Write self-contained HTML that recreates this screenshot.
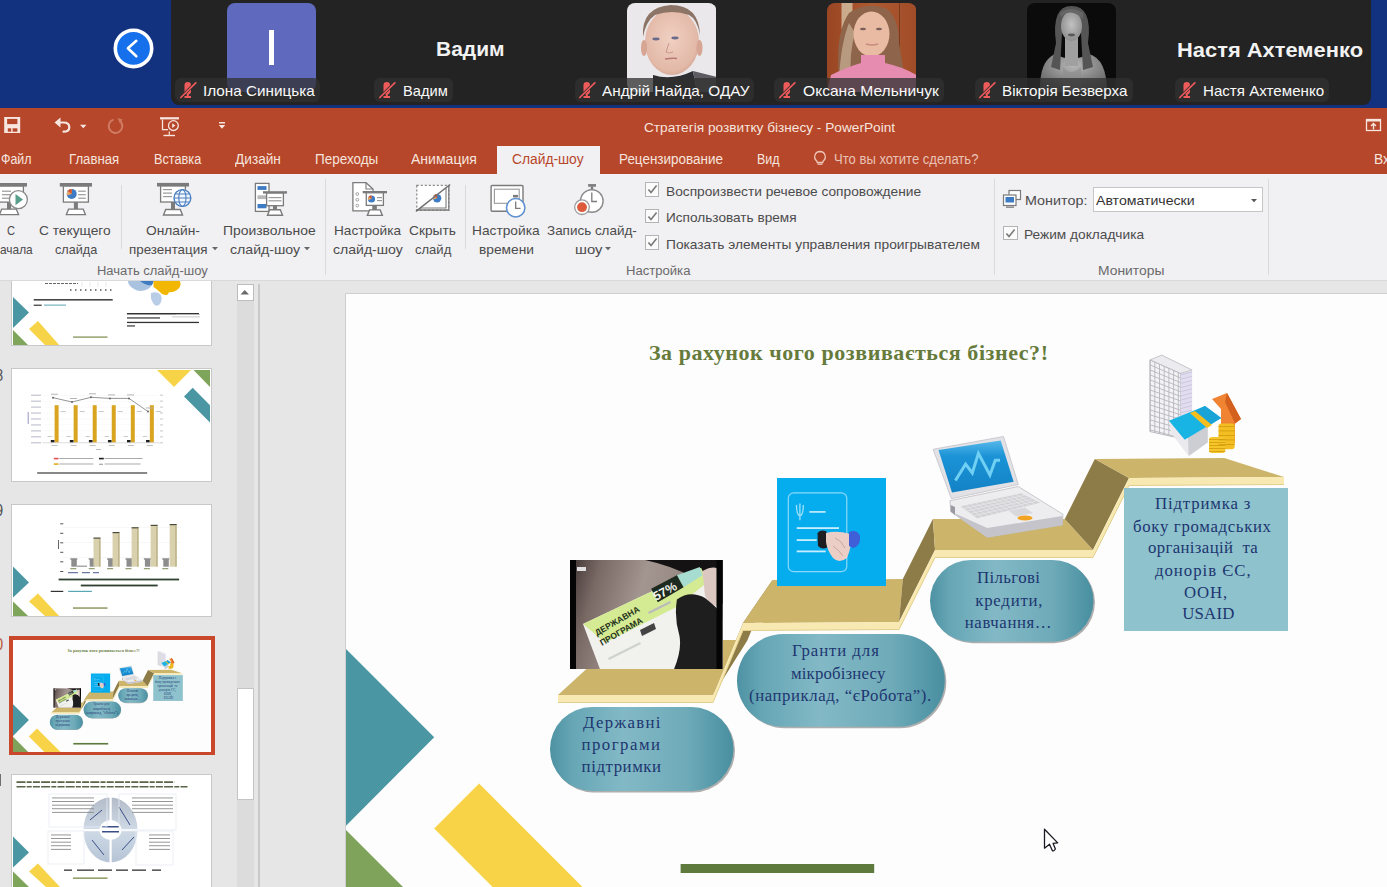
<!DOCTYPE html>
<html><head><meta charset="utf-8">
<style>
*{margin:0;padding:0;box-sizing:border-box}
html,body{width:1387px;height:887px;overflow:hidden;background:#e6e6e6;font-family:"Liberation Sans",sans-serif}
.a{position:absolute}
.t{position:absolute;white-space:nowrap}
</style></head><body>
<div class="a" style="left:0px;top:0px;width:1387px;height:108px;background:#12317f"></div>
<div class="a" style="left:171px;top:0px;width:1200px;height:104.8px;background:#232323;border-radius:0 0 8px 8px"></div>
<svg class="a" style="left:112px;top:27px;" width="44" height="44" viewBox="0 0 44 44"><circle cx="21.5" cy="21.4" r="18.2" fill="#1670eb" stroke="#fff" stroke-width="3.6"/><polyline points="24.3,13.8 15.9,21.2 24.3,29.3" fill="none" stroke="#fff" stroke-width="2.6" stroke-linecap="round" stroke-linejoin="round"/></svg>
<div class="a" style="left:226.6px;top:3.3px;width:89.4px;height:89px;background:#5f6abf;border-radius:8px"></div>
<div class="a" style="left:268.5px;top:30px;width:5px;height:35px;background:#fff"></div>
<svg class="a" style="left:626.7px;top:3.4px;" width="89.5" height="89" viewBox="0 0 89.5 89"><defs><clipPath id="c3"><rect width="89.5" height="89" rx="8"/></clipPath><radialGradient id="f3" cx=".48" cy=".45" r=".6"><stop offset="0" stop-color="#f0d0c2"/><stop offset=".8" stop-color="#e3b9a8"/><stop offset="1" stop-color="#d2a392"/></radialGradient></defs><g clip-path="url(#c3)"><rect width="89.5" height="89" fill="#ebe8eb"/><ellipse cx="45" cy="39" rx="27" ry="33" fill="url(#f3)"/><path d="M16 34 Q14 4 44 2 Q72 2 73 32 Q70 16 62 12 Q45 6 28 12 Q19 18 16 34 Z" fill="#8c7466"/><ellipse cx="17" cy="45" rx="3" ry="8" fill="#d6a593"/><ellipse cx="72.5" cy="45" rx="3" ry="8" fill="#d6a593"/><path d="M26 72 Q45 78 66 68 L70 89 L26 89 Z" fill="#2e2d31"/><path d="M66 68 L89.5 74 L89.5 89 L70 89 Z" fill="#5d5b61"/><ellipse cx="29" cy="36" rx="3.6" ry="1.4" fill="#6a6b8a"/><ellipse cx="48" cy="35" rx="3.6" ry="1.4" fill="#6a6b8a"/><path d="M38 56 Q45 55 50 55.5" stroke="#b87772" stroke-width="1.5" fill="none"/><path d="M42 40 L39 49 Q42 51 46 49" stroke="#c9998a" stroke-width="1" fill="none"/></g></svg>
<svg class="a" style="left:826.7px;top:3.4px;" width="89.5" height="89" viewBox="0 0 89.5 89"><defs><clipPath id="c4"><rect width="89.5" height="89" rx="8"/></clipPath><linearGradient id="w4" x1="0" x2="1"><stop offset="0" stop-color="#9a4523"/><stop offset=".5" stop-color="#ad5a32"/><stop offset="1" stop-color="#a14c28"/></linearGradient></defs><g clip-path="url(#c4)"><rect width="89.5" height="89" fill="url(#w4)"/><rect x="72" y="0" width="1" height="89" fill="#7b3a1e"/><rect x="14.5" y="0" width="11" height="26" fill="#d4c3a6" opacity=".8"/><path d="M12 75 Q8 30 22 10 Q40 -2 60 6 Q72 16 72 40 L78 76 Q60 82 45 80 Q25 82 12 75 Z" fill="#8e654b"/><path d="M12 75 Q14 40 22 20 L28 30 Q22 50 24 76 Z" fill="#b79a7f"/><ellipse cx="44.5" cy="31" rx="18" ry="22.5" fill="#e9bba2"/><path d="M0 89 L4 72 Q20 64 34 60 L34 52 L58 52 L58 60 Q76 64 89.5 72 L89.5 89 Z" fill="#e68cb1"/><ellipse cx="36" cy="26" rx="3" ry="1.2" fill="#7a5f5a"/><ellipse cx="52" cy="26" rx="3" ry="1.2" fill="#7a5f5a"/><path d="M39 41 Q45 43 51 41" stroke="#c98a80" stroke-width="1.4" fill="none"/></g></svg>
<svg class="a" style="left:1027px;top:3.4px;" width="89" height="89" viewBox="0 0 89 89"><defs><clipPath id="c5"><rect width="89" height="89" rx="8"/></clipPath><radialGradient id="f5" cx=".5" cy=".45" r=".6"><stop offset="0" stop-color="#c2c2c2"/><stop offset="1" stop-color="#8a8a8a"/></radialGradient><radialGradient id="s5" cx=".5" cy=".3" r=".7"><stop offset="0" stop-color="#b8b8b8"/><stop offset="1" stop-color="#5e5e5e"/></radialGradient></defs><g clip-path="url(#c5)"><rect width="89" height="89" fill="#0b0b0b"/><path d="M13 89 Q12 58 28 51 Q44 60 62 51 Q80 56 80 89 Z" fill="url(#s5)"/><rect x="38" y="33" width="13" height="30" fill="#a0a0a0"/><path d="M29 40 Q24 3 44.5 3 Q66 3 61 40 L66 64 L56 67 L54 30 L35 30 L33 67 L24 64 Z" fill="#555"/><ellipse cx="44.5" cy="23" rx="10.5" ry="15" fill="url(#f5)"/><path d="M34 14 Q44 4 56 16 L56 10 Q44 2 33 10 Z" fill="#666"/><ellipse cx="44.5" cy="32" rx="3.5" ry="1.4" fill="#5a5a5a"/><path d="M36 64 Q44 74 54 64 L54 89 L36 89 Z" fill="#8c8c8c" opacity=".6"/></g></svg>
<div class="t" style="left:436.40px;top:39.27px;font-size:20px;line-height:20px;color:#f2f2f2;font-family:'Liberation Sans',sans-serif;font-weight:700;transform:scaleX(1.0493);transform-origin:0 0;">Вадим</div>
<div class="t" style="left:1177.00px;top:39.57px;font-size:20px;line-height:20px;color:#f2f2f2;font-family:'Liberation Sans',sans-serif;font-weight:700;transform:scaleX(1.0949);transform-origin:0 0;">Настя Ахтеменко</div>
<div class="a" style="left:175px;top:77.8px;width:145px;height:24px;background:rgba(48,48,48,.76);border-radius:6px"></div>
<svg class="a" style="left:179.5px;top:81.8px;" width="17" height="17" viewBox="0 0 17 17"><rect x="4.5" y="0" width="6.5" height="12.5" rx="3.2" fill="#ef5a5a"/><rect x="4.5" y="14" width="6.5" height="2" fill="#ef5a5a"/><rect x="6.8" y="12" width="2" height="2.5" fill="#ef5a5a"/><line x1="0.5" y1="15.8" x2="16" y2="0.5" stroke="#2e2e2e" stroke-width="3"/><line x1="0.8" y1="15.5" x2="15.8" y2="0.8" stroke="#ef5a5a" stroke-width="1.7" stroke-linecap="round"/></svg>
<div class="t" style="left:202.90px;top:83.10px;font-size:15px;line-height:15px;color:#fafafa;font-family:'Liberation Sans',sans-serif;font-weight:400;transform:scaleX(1.0178);transform-origin:0 0;">Ілона Синицька</div>
<div class="a" style="left:374.4px;top:77.8px;width:78.5px;height:24px;background:rgba(48,48,48,.76);border-radius:6px"></div>
<svg class="a" style="left:378.9px;top:81.8px;" width="17" height="17" viewBox="0 0 17 17"><rect x="4.5" y="0" width="6.5" height="12.5" rx="3.2" fill="#ef5a5a"/><rect x="4.5" y="14" width="6.5" height="2" fill="#ef5a5a"/><rect x="6.8" y="12" width="2" height="2.5" fill="#ef5a5a"/><line x1="0.5" y1="15.8" x2="16" y2="0.5" stroke="#2e2e2e" stroke-width="3"/><line x1="0.8" y1="15.5" x2="15.8" y2="0.8" stroke="#ef5a5a" stroke-width="1.7" stroke-linecap="round"/></svg>
<div class="t" style="left:402.70px;top:83.10px;font-size:15px;line-height:15px;color:#fafafa;font-family:'Liberation Sans',sans-serif;font-weight:400;transform:scaleX(0.9770);transform-origin:0 0;">Вадим</div>
<div class="a" style="left:574.9px;top:77.8px;width:179.60000000000002px;height:24px;background:rgba(48,48,48,.76);border-radius:6px"></div>
<svg class="a" style="left:579.4px;top:81.8px;" width="17" height="17" viewBox="0 0 17 17"><rect x="4.5" y="0" width="6.5" height="12.5" rx="3.2" fill="#ef5a5a"/><rect x="4.5" y="14" width="6.5" height="2" fill="#ef5a5a"/><rect x="6.8" y="12" width="2" height="2.5" fill="#ef5a5a"/><line x1="0.5" y1="15.8" x2="16" y2="0.5" stroke="#2e2e2e" stroke-width="3"/><line x1="0.8" y1="15.5" x2="15.8" y2="0.8" stroke="#ef5a5a" stroke-width="1.7" stroke-linecap="round"/></svg>
<div class="t" style="left:602.20px;top:83.10px;font-size:15px;line-height:15px;color:#fafafa;font-family:'Liberation Sans',sans-serif;font-weight:400;transform:scaleX(1.0204);transform-origin:0 0;">Андрій Найда, ОДАУ</div>
<div class="a" style="left:774.4px;top:77.8px;width:169.60000000000002px;height:24px;background:rgba(48,48,48,.76);border-radius:6px"></div>
<svg class="a" style="left:778.9px;top:81.8px;" width="17" height="17" viewBox="0 0 17 17"><rect x="4.5" y="0" width="6.5" height="12.5" rx="3.2" fill="#ef5a5a"/><rect x="4.5" y="14" width="6.5" height="2" fill="#ef5a5a"/><rect x="6.8" y="12" width="2" height="2.5" fill="#ef5a5a"/><line x1="0.5" y1="15.8" x2="16" y2="0.5" stroke="#2e2e2e" stroke-width="3"/><line x1="0.8" y1="15.5" x2="15.8" y2="0.8" stroke="#ef5a5a" stroke-width="1.7" stroke-linecap="round"/></svg>
<div class="t" style="left:802.70px;top:83.10px;font-size:15px;line-height:15px;color:#fafafa;font-family:'Liberation Sans',sans-serif;font-weight:400;transform:scaleX(1.0399);transform-origin:0 0;">Оксана Мельничук</div>
<div class="a" style="left:974.9px;top:77.8px;width:158.0000000000001px;height:24px;background:rgba(48,48,48,.76);border-radius:6px"></div>
<svg class="a" style="left:979.4px;top:81.8px;" width="17" height="17" viewBox="0 0 17 17"><rect x="4.5" y="0" width="6.5" height="12.5" rx="3.2" fill="#ef5a5a"/><rect x="4.5" y="14" width="6.5" height="2" fill="#ef5a5a"/><rect x="6.8" y="12" width="2" height="2.5" fill="#ef5a5a"/><line x1="0.5" y1="15.8" x2="16" y2="0.5" stroke="#2e2e2e" stroke-width="3"/><line x1="0.8" y1="15.5" x2="15.8" y2="0.8" stroke="#ef5a5a" stroke-width="1.7" stroke-linecap="round"/></svg>
<div class="t" style="left:1002.20px;top:83.10px;font-size:15px;line-height:15px;color:#fafafa;font-family:'Liberation Sans',sans-serif;font-weight:400;transform:scaleX(1.0131);transform-origin:0 0;">Вікторія Безверха</div>
<div class="a" style="left:1174.7px;top:77.8px;width:153.89999999999986px;height:24px;background:rgba(48,48,48,.76);border-radius:6px"></div>
<svg class="a" style="left:1179.2px;top:81.8px;" width="17" height="17" viewBox="0 0 17 17"><rect x="4.5" y="0" width="6.5" height="12.5" rx="3.2" fill="#ef5a5a"/><rect x="4.5" y="14" width="6.5" height="2" fill="#ef5a5a"/><rect x="6.8" y="12" width="2" height="2.5" fill="#ef5a5a"/><line x1="0.5" y1="15.8" x2="16" y2="0.5" stroke="#2e2e2e" stroke-width="3"/><line x1="0.8" y1="15.5" x2="15.8" y2="0.8" stroke="#ef5a5a" stroke-width="1.7" stroke-linecap="round"/></svg>
<div class="t" style="left:1202.60px;top:83.10px;font-size:15px;line-height:15px;color:#fafafa;font-family:'Liberation Sans',sans-serif;font-weight:400;transform:scaleX(1.0071);transform-origin:0 0;">Настя Ахтеменко</div>
<div class="a" style="left:0px;top:108px;width:1387px;height:65.5px;background:#b7472a"></div>
<div class="a" style="left:0px;top:173.5px;width:1387px;height:107px;background:#f1f0f3;border-bottom:1px solid #d9d9d9"></div>
<svg class="a" style="left:0px;top:112px;" width="240" height="28" viewBox="0 0 240 28"><rect x="4.2" y="5" width="16" height="16" fill="#f7e6e0"/><rect x="7.1" y="6.9" width="10.3" height="5.2" fill="#b7472a"/><rect x="7.8" y="16.3" width="3.4" height="3.4" fill="#b7472a"/><rect x="12.6" y="16.3" width="4.8" height="3.4" fill="#b7472a"/><g transform="translate(0,-1.8)"><path d="M54.5 12.3 L60.5 7.2 L60.5 17.4 Z" fill="#f7e6e0"/><path d="M59 12.3 H63.5 Q69.3 12.3 69.3 17 Q69.3 21.5 63.5 21.5" fill="none" stroke="#f7e6e0" stroke-width="2.2" stroke-linecap="round"/></g><path d="M80 12.8 L86.5 12.8 L83.25 16.2 Z" fill="#f7e6e0"/><path d="M120.5 9.5 A6.8 6.8 0 1 1 113.5 7.6" fill="none" stroke="#cf7a62" stroke-width="2"/><path d="M117.5 6 L122.5 7.5 L120 11.5 Z" fill="#cf7a62"/><rect x="160" y="5.2" width="19" height="2.2" fill="#f7e6e0"/><path d="M162.5 7.4 V17.6 H168" fill="none" stroke="#f7e6e0" stroke-width="1.3"/><circle cx="173.4" cy="13.6" r="4.9" fill="none" stroke="#f7e6e0" stroke-width="1.3"/><path d="M172.2 11.3 L175.4 13.6 L172.2 15.9 Z" fill="#f7e6e0"/><rect x="163.5" y="22.8" width="11.5" height="1.4" fill="#f7e6e0"/><rect x="168.7" y="19.5" width="1.2" height="3.3" fill="#f7e6e0"/><rect x="219" y="10" width="6" height="1.5" fill="#f7e6e0"/><path d="M218.8 13 L225.2 13 L222 16.8 Z" fill="#f7e6e0"/></svg>
<div class="t" style="left:643.70px;top:120.77px;font-size:13.5px;line-height:13.5px;color:#f6e4de;font-family:'Liberation Sans',sans-serif;font-weight:400;transform:scaleX(1.0120);transform-origin:0 0;">Стратегія розвитку бізнесу - PowerPoint</div>
<svg class="a" style="left:1364px;top:117px;" width="20" height="16" viewBox="0 0 20 16"><rect x="2.5" y="2.5" width="14" height="11" fill="none" stroke="#f7e6e0" stroke-width="1.3"/><rect x="2.5" y="2.5" width="14" height="2" fill="#f7e6e0"/><path d="M9.5 12.5 V7 M7 9 L9.5 6.5 L12 9" fill="none" stroke="#f7e6e0" stroke-width="1.4"/></svg>
<div class="a" style="left:496.5px;top:145.7px;width:103.8px;height:28px;background:#f1f0f3"></div>
<div class="t" style="left:0.50px;top:153.12px;font-size:13.8px;line-height:13.8px;color:#f6e4de;font-family:'Liberation Sans',sans-serif;font-weight:400;transform:scaleX(0.9004);transform-origin:0 0;">Файл</div>
<div class="t" style="left:69.20px;top:153.12px;font-size:13.8px;line-height:13.8px;color:#f6e4de;font-family:'Liberation Sans',sans-serif;font-weight:400;transform:scaleX(0.9562);transform-origin:0 0;">Главная</div>
<div class="t" style="left:153.70px;top:153.12px;font-size:13.8px;line-height:13.8px;color:#f6e4de;font-family:'Liberation Sans',sans-serif;font-weight:400;transform:scaleX(0.9207);transform-origin:0 0;">Вставка</div>
<div class="t" style="left:234.70px;top:153.12px;font-size:13.8px;line-height:13.8px;color:#f6e4de;font-family:'Liberation Sans',sans-serif;font-weight:400;transform:scaleX(0.9898);transform-origin:0 0;">Дизайн</div>
<div class="t" style="left:315.30px;top:153.12px;font-size:13.8px;line-height:13.8px;color:#f6e4de;font-family:'Liberation Sans',sans-serif;font-weight:400;transform:scaleX(0.9776);transform-origin:0 0;">Переходы</div>
<div class="t" style="left:411.40px;top:153.12px;font-size:13.8px;line-height:13.8px;color:#f6e4de;font-family:'Liberation Sans',sans-serif;font-weight:400;transform:scaleX(1.0178);transform-origin:0 0;">Анимация</div>
<div class="t" style="left:512.00px;top:153.12px;font-size:13.8px;line-height:13.8px;color:#b7472a;font-family:'Liberation Sans',sans-serif;font-weight:400;">Слайд-шоу</div>
<div class="t" style="left:618.50px;top:153.12px;font-size:13.8px;line-height:13.8px;color:#f6e4de;font-family:'Liberation Sans',sans-serif;font-weight:400;transform:scaleX(0.9756);transform-origin:0 0;">Рецензирование</div>
<div class="t" style="left:757.20px;top:153.12px;font-size:13.8px;line-height:13.8px;color:#f6e4de;font-family:'Liberation Sans',sans-serif;font-weight:400;transform:scaleX(0.9040);transform-origin:0 0;">Вид</div>
<div class="t" style="left:833.90px;top:153.12px;font-size:13.8px;line-height:13.8px;color:#e9c2b6;font-family:'Liberation Sans',sans-serif;font-weight:400;transform:scaleX(0.9469);transform-origin:0 0;">Что вы хотите сделать?</div>
<div class="t" style="left:1374.00px;top:153.12px;font-size:13.8px;line-height:13.8px;color:#f6e4de;font-family:'Liberation Sans',sans-serif;font-weight:400;">Вх</div>
<svg class="a" style="left:812px;top:150px;" width="16" height="17" viewBox="0 0 16 17"><path d="M8 1.5 A5.3 5.3 0 0 1 11.2 11 L10.8 12.5 H5.2 L4.8 11 A5.3 5.3 0 0 1 8 1.5 Z" fill="none" stroke="#edc5b9" stroke-width="1.3"/><rect x="5.5" y="13.5" width="5" height="1.3" fill="#edc5b9"/></svg>
<svg class="a" style="left:0px;top:0px;" width="1387" height="280" viewBox="0 0 1387 280"><rect x="-9" y="183" width="36" height="3.6" fill="#7b7b7b"/><rect x="-5.4" y="186.1" width="28.799999999999997" height="16" fill="#fff" stroke="#7b7b7b" stroke-width="1.3"/><rect x="7.0" y="202.1" width="4" height="9" fill="#7b7b7b"/><path d="M1.7000000000000002 209.1 L16.3 209.1 L18.5 214.6 L-0.5 214.6 Z" fill="#fff" stroke="#7b7b7b" stroke-width="1.4"/><rect x="2" y="190.6" width="9" height="1.2" fill="#9a9a9a"/><rect x="2" y="194.1" width="9" height="1.2" fill="#9a9a9a"/><rect x="2" y="197.6" width="9" height="1.2" fill="#9a9a9a"/><circle cx="18.4" cy="199.6" r="9" fill="#fff" stroke="#8a8a8a" stroke-width="1.3"/><path d="M15.5 194 L23 199.6 L15.5 205.2 Z" fill="#5a9f8b"/><rect x="59.8" y="183" width="32.2" height="3.6" fill="#7b7b7b"/><rect x="63.4" y="186.1" width="25.000000000000007" height="16" fill="#fff" stroke="#7b7b7b" stroke-width="1.3"/><rect x="73.9" y="202.1" width="4" height="9" fill="#7b7b7b"/><path d="M68.60000000000001 209.1 L83.2 209.1 L85.4 214.6 L66.4 214.6 Z" fill="#fff" stroke="#7b7b7b" stroke-width="1.4"/><circle cx="71.7" cy="193.9" r="5" fill="#3d7cc4"/><path d="M71.7 193.9 L71.7 188.9 A5 5 0 0 0 66.95 195.4 Z" fill="#e9a96a"/><path d="M71.7 193.9 L71.7 188.9 A5 5 0 0 0 67.7 190.9 Z" fill="#d8532c"/><rect x="78.2" y="190.6" width="7.6" height="1.2" fill="#9a9a9a"/><rect x="78.2" y="194.1" width="7.6" height="1.2" fill="#9a9a9a"/><rect x="78.2" y="197.6" width="7.6" height="1.2" fill="#9a9a9a"/><rect x="157" y="182.9" width="32" height="3.6" fill="#7b7b7b"/><rect x="160.6" y="186.0" width="24.80000000000001" height="16" fill="#fff" stroke="#7b7b7b" stroke-width="1.3"/><rect x="171.0" y="202.0" width="4" height="9.5" fill="#7b7b7b"/><path d="M165.7 209.5 L180.3 209.5 L182.5 215.0 L163.5 215.0 Z" fill="#fff" stroke="#7b7b7b" stroke-width="1.4"/><rect x="163" y="189.0" width="9" height="1.2" fill="#9a9a9a"/><rect x="163" y="192.5" width="9" height="1.2" fill="#9a9a9a"/><rect x="163" y="196.0" width="9" height="1.2" fill="#9a9a9a"/><circle cx="182.4" cy="198" r="8.4" fill="#f4f8fc" stroke="#4a7fc1" stroke-width="1.4"/><ellipse cx="182.4" cy="198" rx="3.6" ry="8.4" fill="none" stroke="#4a7fc1" stroke-width="1.1"/><path d="M174 198 H191 M175.5 194 H189.3 M175.5 202 H189.3" stroke="#4a7fc1" stroke-width="1.1"/><rect x="255.4" y="183.4" width="13.6" height="28" fill="#fff" stroke="#7b7b7b" stroke-width="1.3"/><rect x="257.5" y="186.1" width="9" height="3.8" fill="#3d7cc4"/><rect x="257.5" y="195.3" width="9" height="3.8" fill="#b8b8b8"/><rect x="257.5" y="204" width="9" height="4.3" fill="#3d7cc4"/><rect x="263" y="191.2" width="24" height="2.4" fill="#7b7b7b"/><rect x="266.6" y="193.1" width="16.799999999999955" height="12.6" fill="#fff" stroke="#7b7b7b" stroke-width="1.3"/><rect x="273.0" y="205.7" width="4" height="6" fill="#7b7b7b"/><path d="M269.7 209.7 L280.3 209.7 L282.5 215.2 L267.5 215.2 Z" fill="#fff" stroke="#7b7b7b" stroke-width="1.4"/><rect x="268.5" y="197.0" width="13" height="1.2" fill="#9a9a9a"/><rect x="268.5" y="200.2" width="13" height="1.2" fill="#9a9a9a"/><path d="M352.9 182.7 H366 L373 189 V210.8 H352.9 Z" fill="#fff" stroke="#7b7b7b" stroke-width="1.3"/><path d="M366 182.7 V189 H373" fill="none" stroke="#7b7b7b" stroke-width="1.1"/><circle cx="357.3" cy="194.0" r="1.4" fill="none" stroke="#999" stroke-width=".9"/><circle cx="357.3" cy="199.8" r="1.4" fill="none" stroke="#999" stroke-width=".9"/><circle cx="357.3" cy="205.6" r="1.4" fill="none" stroke="#999" stroke-width=".9"/><rect x="362.7" y="191" width="24.3" height="2.3" fill="#7b7b7b"/><rect x="366.3" y="192.8" width="17.099999999999966" height="12.6" fill="#fff" stroke="#7b7b7b" stroke-width="1.3"/><rect x="372.84999999999997" y="205.4" width="4" height="6.5" fill="#7b7b7b"/><path d="M369.54999999999995 209.9 L380.15 209.9 L382.34999999999997 215.4 L367.34999999999997 215.4 Z" fill="#fff" stroke="#7b7b7b" stroke-width="1.4"/><circle cx="371.5" cy="199" r="3.6" fill="#3d7cc4"/><path d="M371.5 199 L371.5 195.4 A3.6 3.6 0 0 0 368.08 200.08 Z" fill="#e9a96a"/><path d="M371.5 199 L371.5 195.4 A3.6 3.6 0 0 0 368.62 196.84 Z" fill="#d8532c"/><rect x="377" y="197" width="5" height="1.2" fill="#9a9a9a"/><rect x="377" y="200" width="5" height="1.2" fill="#9a9a9a"/><rect x="416.8" y="185.4" width="32" height="25" fill="#fff" stroke="#8a8a8a" stroke-width="1.3" stroke-dasharray="2 2"/><path d="M420 208 H446 V188" fill="none" stroke="#7b7b7b" stroke-width="1.1"/><path d="M416 210 H448.8 V186" fill="none" stroke="#7b7b7b" stroke-width="1.3"/><circle cx="437.1" cy="198.3" r="4.2" fill="#3d7cc4"/><path d="M437.1 198.3 L437.1 194.10000000000002 A4.2 4.2 0 0 0 433.11 199.56 Z" fill="#e9a96a"/><path d="M437.1 198.3 L437.1 194.10000000000002 A4.2 4.2 0 0 0 433.74 195.78 Z" fill="#d8532c"/><line x1="415.9" y1="211.3" x2="450.1" y2="184.5" stroke="#6f6f6f" stroke-width="1.5"/><rect x="491.1" y="185.5" width="31.9" height="25.8" rx="1" fill="#fff" stroke="#7b7b7b" stroke-width="1.4"/><rect x="494.4" y="189.2" width="24.8" height="14.1" fill="none" stroke="#999" stroke-width="1.1"/><rect x="513" y="194.9" width="5" height="2.5" fill="#7b7b7b"/><circle cx="515.7" cy="207.8" r="9.2" fill="#fff" stroke="#5b8fd0" stroke-width="1.5"/><path d="M515.7 201.5 V208.3 H520.5" fill="none" stroke="#7b7b7b" stroke-width="1.3"/><rect x="588.1" y="184.1" width="7.9" height="2.6" fill="#7b7b7b"/><rect x="590.8" y="186.5" width="2.4" height="3" fill="#7b7b7b"/><circle cx="591.8" cy="201" r="11.3" fill="#fff" stroke="#8a8a8a" stroke-width="1.4"/><path d="M591.8 192.5 V201.5 H597" fill="none" stroke="#7b7b7b" stroke-width="1.3"/><circle cx="582" cy="207.2" r="7.3" fill="#fff" stroke="#9a9a9a" stroke-width="1.3"/><circle cx="582" cy="207.2" r="4.9" fill="#dd5b3b"/><rect x="1009" y="190.5" width="11.5" height="9" fill="#fff" stroke="#7b7b7b" stroke-width="1.2"/><rect x="1003.5" y="195" width="12.5" height="10.5" fill="#fff" stroke="#7b7b7b" stroke-width="1.2"/><rect x="1005.5" y="197" width="8.5" height="5.5" fill="#3d7cc4"/><rect x="1006" y="206.5" width="8" height="1.3" fill="#7b7b7b"/></svg>
<div class="t" style="left:7.10px;top:224.03px;font-size:13.2px;line-height:13.2px;color:#4c4c4c;font-family:'Liberation Sans',sans-serif;font-weight:400;transform:scaleX(0.8421);transform-origin:0 0;">С</div>
<div class="t" style="left:-0.30px;top:242.73px;font-size:13.2px;line-height:13.2px;color:#4c4c4c;font-family:'Liberation Sans',sans-serif;font-weight:400;transform:scaleX(0.9017);transform-origin:0 0;">ачала</div>
<div class="t" style="left:39.30px;top:224.03px;font-size:13.2px;line-height:13.2px;color:#4c4c4c;font-family:'Liberation Sans',sans-serif;font-weight:400;transform:scaleX(1.0410);transform-origin:0 0;">С текущего</div>
<div class="t" style="left:54.70px;top:242.73px;font-size:13.2px;line-height:13.2px;color:#4c4c4c;font-family:'Liberation Sans',sans-serif;font-weight:400;transform:scaleX(0.9609);transform-origin:0 0;">слайда</div>
<div class="t" style="left:145.60px;top:224.03px;font-size:13.2px;line-height:13.2px;color:#4c4c4c;font-family:'Liberation Sans',sans-serif;font-weight:400;transform:scaleX(1.0441);transform-origin:0 0;">Онлайн-</div>
<div class="t" style="left:128.50px;top:242.73px;font-size:13.2px;line-height:13.2px;color:#4c4c4c;font-family:'Liberation Sans',sans-serif;font-weight:400;transform:scaleX(1.0145);transform-origin:0 0;">презентация</div>
<div class="t" style="left:222.50px;top:224.03px;font-size:13.2px;line-height:13.2px;color:#4c4c4c;font-family:'Liberation Sans',sans-serif;font-weight:400;transform:scaleX(1.0534);transform-origin:0 0;">Произвольное</div>
<div class="t" style="left:229.60px;top:242.73px;font-size:13.2px;line-height:13.2px;color:#4c4c4c;font-family:'Liberation Sans',sans-serif;font-weight:400;transform:scaleX(1.0718);transform-origin:0 0;">слайд-шоу</div>
<div class="t" style="left:333.80px;top:224.03px;font-size:13.2px;line-height:13.2px;color:#4c4c4c;font-family:'Liberation Sans',sans-serif;font-weight:400;transform:scaleX(1.0323);transform-origin:0 0;">Настройка</div>
<div class="t" style="left:333.00px;top:242.73px;font-size:13.2px;line-height:13.2px;color:#4c4c4c;font-family:'Liberation Sans',sans-serif;font-weight:400;transform:scaleX(1.0656);transform-origin:0 0;">слайд-шоу</div>
<div class="t" style="left:409.20px;top:224.03px;font-size:13.2px;line-height:13.2px;color:#4c4c4c;font-family:'Liberation Sans',sans-serif;font-weight:400;transform:scaleX(1.0400);transform-origin:0 0;">Скрыть</div>
<div class="t" style="left:415.00px;top:242.73px;font-size:13.2px;line-height:13.2px;color:#4c4c4c;font-family:'Liberation Sans',sans-serif;font-weight:400;transform:scaleX(0.9878);transform-origin:0 0;">слайд</div>
<div class="t" style="left:472.30px;top:224.03px;font-size:13.2px;line-height:13.2px;color:#4c4c4c;font-family:'Liberation Sans',sans-serif;font-weight:400;transform:scaleX(1.0415);transform-origin:0 0;">Настройка</div>
<div class="t" style="left:479.00px;top:242.73px;font-size:13.2px;line-height:13.2px;color:#4c4c4c;font-family:'Liberation Sans',sans-serif;font-weight:400;transform:scaleX(1.0427);transform-origin:0 0;">времени</div>
<div class="t" style="left:546.50px;top:224.03px;font-size:13.2px;line-height:13.2px;color:#4c4c4c;font-family:'Liberation Sans',sans-serif;font-weight:400;transform:scaleX(1.0201);transform-origin:0 0;">Запись слайд-</div>
<div class="t" style="left:574.60px;top:242.73px;font-size:13.2px;line-height:13.2px;color:#4c4c4c;font-family:'Liberation Sans',sans-serif;font-weight:400;transform:scaleX(1.1241);transform-origin:0 0;">шоу</div>
<svg class="a" style="left:211.5px;top:247.3px;" width="7" height="4" viewBox="0 0 7 4"><path d="M0 0 L6 0 L3 3.2 Z" fill="#666"/></svg>
<svg class="a" style="left:304px;top:247.3px;" width="7" height="4" viewBox="0 0 7 4"><path d="M0 0 L6 0 L3 3.2 Z" fill="#666"/></svg>
<svg class="a" style="left:605px;top:247.3px;" width="7" height="4" viewBox="0 0 7 4"><path d="M0 0 L6 0 L3 3.2 Z" fill="#666"/></svg>
<div class="t" style="left:97.10px;top:264.72px;font-size:12.5px;line-height:12.5px;color:#6a6a6a;font-family:'Liberation Sans',sans-serif;font-weight:400;transform:scaleX(1.0382);transform-origin:0 0;">Начать слайд-шоу</div>
<div class="t" style="left:626.30px;top:264.72px;font-size:12.5px;line-height:12.5px;color:#6a6a6a;font-family:'Liberation Sans',sans-serif;font-weight:400;transform:scaleX(1.0467);transform-origin:0 0;">Настройка</div>
<div class="t" style="left:1098.20px;top:264.72px;font-size:12.5px;line-height:12.5px;color:#6a6a6a;font-family:'Liberation Sans',sans-serif;font-weight:400;transform:scaleX(1.1090);transform-origin:0 0;">Мониторы</div>
<div class="a" style="left:121px;top:185px;width:1px;height:63.5px;background:#dadada"></div>
<div class="a" style="left:464.5px;top:185px;width:1px;height:63.5px;background:#dadada"></div>
<div class="a" style="left:324.8px;top:179px;width:1px;height:96px;background:#dadada"></div>
<div class="a" style="left:994.2px;top:179px;width:1px;height:96px;background:#dadada"></div>
<div class="a" style="left:1268.2px;top:179px;width:1px;height:96px;background:#dadada"></div>
<div class="a" style="left:644.7px;top:182.4px;width:14.8px;height:14.8px;background:#fbfbfc;border:1.5px solid #b4b4b4"></div><svg class="a" style="left:644.7px;top:182.4px;" width="15" height="15" viewBox="0 0 15 15"><polyline points="3.4,7.4 6,10.4 11.6,3.6" fill="none" stroke="#7a7a7a" stroke-width="1.6"/></svg>
<div class="t" style="left:666.00px;top:184.73px;font-size:13.2px;line-height:13.2px;color:#4c4c4c;font-family:'Liberation Sans',sans-serif;font-weight:400;transform:scaleX(1.0404);transform-origin:0 0;">Воспроизвести речевое сопровождение</div>
<div class="a" style="left:644.7px;top:208.5px;width:14.8px;height:14.8px;background:#fbfbfc;border:1.5px solid #b4b4b4"></div><svg class="a" style="left:644.7px;top:208.5px;" width="15" height="15" viewBox="0 0 15 15"><polyline points="3.4,7.4 6,10.4 11.6,3.6" fill="none" stroke="#7a7a7a" stroke-width="1.6"/></svg>
<div class="t" style="left:666.00px;top:210.83px;font-size:13.2px;line-height:13.2px;color:#4c4c4c;font-family:'Liberation Sans',sans-serif;font-weight:400;transform:scaleX(1.0332);transform-origin:0 0;">Использовать время</div>
<div class="a" style="left:644.7px;top:235.2px;width:14.8px;height:14.8px;background:#fbfbfc;border:1.5px solid #b4b4b4"></div><svg class="a" style="left:644.7px;top:235.2px;" width="15" height="15" viewBox="0 0 15 15"><polyline points="3.4,7.4 6,10.4 11.6,3.6" fill="none" stroke="#7a7a7a" stroke-width="1.6"/></svg>
<div class="t" style="left:666.00px;top:237.53px;font-size:13.2px;line-height:13.2px;color:#4c4c4c;font-family:'Liberation Sans',sans-serif;font-weight:400;transform:scaleX(1.0421);transform-origin:0 0;">Показать элементы управления проигрывателем</div>
<div class="a" style="left:1003px;top:225.7px;width:14.8px;height:14.8px;background:#fbfbfc;border:1.5px solid #b4b4b4"></div><svg class="a" style="left:1003px;top:225.7px;" width="15" height="15" viewBox="0 0 15 15"><polyline points="3.4,7.4 6,10.4 11.6,3.6" fill="none" stroke="#7a7a7a" stroke-width="1.6"/></svg>
<div class="t" style="left:1024.30px;top:228.13px;font-size:13.2px;line-height:13.2px;color:#4c4c4c;font-family:'Liberation Sans',sans-serif;font-weight:400;transform:scaleX(1.0384);transform-origin:0 0;">Режим докладчика</div>
<div class="t" style="left:1024.90px;top:193.73px;font-size:13.2px;line-height:13.2px;color:#4c4c4c;font-family:'Liberation Sans',sans-serif;font-weight:400;transform:scaleX(1.0876);transform-origin:0 0;">Монитор:</div>
<div class="a" style="left:1093px;top:187.2px;width:169.5px;height:25.2px;background:#fff;border:1px solid #c6c6c6"></div>
<div class="t" style="left:1095.90px;top:193.73px;font-size:13.2px;line-height:13.2px;color:#333;font-family:'Liberation Sans',sans-serif;font-weight:400;transform:scaleX(1.0699);transform-origin:0 0;">Автоматически</div>
<svg class="a" style="left:1250.5px;top:198.5px;" width="7" height="4" viewBox="0 0 7 4"><path d="M0 0 L6 0 L3 3.2 Z" fill="#555"/></svg>
<div class="a" style="left:0px;top:280.5px;width:1387px;height:606.5px;background:#e6e6e6"></div>
<div class="a" style="left:11.1px;top:281px;width:200.8px;height:65.2px;background:#fff;border:1px solid #c8c8c8;border-top:none"></div>
<svg class="a" style="left:12.1px;top:281px;overflow:hidden" width="198.8" height="64.2" viewBox="0 0 198.8 64.2"><polygon points="1,16 17,31.5 1,47" fill="#4a96a3"/><polygon points="1,49 17,65 1,65" fill="#7ea55a"/><polygon points="17,48 26,40 48,65 34,65" fill="#f7d348"/><rect x="61" y="55.5" width="34.5" height="1.2" fill="#7a8a4a"/><rect x="21.7" y="18" width="79" height="1.6" fill="#333" opacity=".9"/><rect x="21.7" y="23.6" width="8" height="1.3" fill="#444"/><rect x="32" y="23.6" width="22" height="1" fill="#5aa7b5"/><rect x="115" y="32" width="72" height="1.5" fill="#333"/><rect x="115" y="36.3" width="33" height="1.3" fill="#444"/><rect x="115" y="40.8" width="72" height="1.3" fill="#333"/><rect x="115" y="44.3" width="8" height="1.3" fill="#444"/><rect x="164" y="33" width="24" height=".8" fill="#bbb"/><rect x="160" y="35.5" width="28" height=".8" fill="#bbb"/><path d="M116 0 L140 0 Q142 4 136 8 Q128 12 122 8 Q116 5 116 0 Z" fill="#a9c2e0"/><path d="M128 0 L142 0 L140 4 Q134 5 128 0 Z" fill="#3f7bc0"/><path d="M141.5 0 L168 0 Q170 6 165 9 Q160 12 157 11 Q156 16 150 13 Q145 8 141.5 6 Z" fill="#f2b705"/><path d="M139 12 Q146 10 149 14 Q151 20 147 24 Q143 26 141 22 Q138 17 139 12 Z" fill="#b9cde6"/><path d="M33 2.5 H66" stroke="#666" stroke-width="1.2" stroke-dasharray="3 1"/><path d="M58 9 H102" stroke="#555" stroke-width="1.3" stroke-dasharray="1.5 3.5"/><path d="M70 1 V6 M78 1 V6 M86 1 V6 M94 1 V6" stroke="#ddd" stroke-width=".6"/></svg>
<div class="a" style="left:11.1px;top:368.2px;width:200.8px;height:113.60000000000002px;background:#fff;border:1px solid #c8c8c8"></div><svg class="a" style="left:12.1px;top:369.2px;overflow:hidden" width="198.8" height="111.60000000000002" viewBox="0 0 198.8 111.60000000000002"><polygon points="145,1 179,1 162,18" fill="#f7d348"/><polygon points="181.5,1 198,1 198,18" fill="#7ea55a"/><polygon points="172,27.5 180.7,18.8 198,36.2 198,53.6" fill="#4a96a3"/><rect x="19" y="25.7" width="10" height="1" fill="#b8b8c8"/><rect x="148" y="25.7" width="3" height="1" fill="#c8c8c8"/><rect x="32" y="26.0" width="114" height=".4" fill="#f0f0f0"/><rect x="19" y="31.65" width="10" height="1" fill="#b8b8c8"/><rect x="148" y="31.65" width="3" height="1" fill="#c8c8c8"/><rect x="32" y="31.95" width="114" height=".4" fill="#f0f0f0"/><rect x="19" y="37.6" width="10" height="1" fill="#b8b8c8"/><rect x="148" y="37.6" width="3" height="1" fill="#c8c8c8"/><rect x="32" y="37.9" width="114" height=".4" fill="#f0f0f0"/><rect x="19" y="43.55" width="10" height="1" fill="#b8b8c8"/><rect x="148" y="43.55" width="3" height="1" fill="#c8c8c8"/><rect x="32" y="43.849999999999994" width="114" height=".4" fill="#f0f0f0"/><rect x="19" y="49.5" width="10" height="1" fill="#b8b8c8"/><rect x="148" y="49.5" width="3" height="1" fill="#c8c8c8"/><rect x="32" y="49.8" width="114" height=".4" fill="#f0f0f0"/><rect x="19" y="55.45" width="10" height="1" fill="#b8b8c8"/><rect x="148" y="55.45" width="3" height="1" fill="#c8c8c8"/><rect x="32" y="55.75" width="114" height=".4" fill="#f0f0f0"/><rect x="19" y="61.400000000000006" width="10" height="1" fill="#b8b8c8"/><rect x="148" y="61.400000000000006" width="3" height="1" fill="#c8c8c8"/><rect x="32" y="61.7" width="114" height=".4" fill="#f0f0f0"/><rect x="19" y="67.35" width="10" height="1" fill="#b8b8c8"/><rect x="148" y="67.35" width="3" height="1" fill="#c8c8c8"/><rect x="32" y="67.64999999999999" width="114" height=".4" fill="#f0f0f0"/><rect x="19" y="73.3" width="10" height="1" fill="#b8b8c8"/><rect x="148" y="73.3" width="3" height="1" fill="#c8c8c8"/><rect x="32" y="73.6" width="114" height=".4" fill="#f0f0f0"/><rect x="15.6" y="43" width="1.3" height="12" fill="#b0b0d0"/><rect x="42.6" y="36.2" width="4" height="37.3" fill="#d9a520"/><rect x="38.800000000000004" y="71" width="3.6" height="2.5" fill="#1f1f1f"/><rect x="48.6" y="42" width="5" height="1" fill="#c8c8c8"/><rect x="35.6" y="67" width="4" height="1" fill="#c8c8c8"/><rect x="39.6" y="76" width="6" height="1" fill="#c0c0c0"/><rect x="61.650000000000006" y="36.2" width="4" height="37.3" fill="#d9a520"/><rect x="57.85000000000001" y="71" width="3.6" height="2.5" fill="#1f1f1f"/><rect x="67.65" y="42" width="5" height="1" fill="#c8c8c8"/><rect x="54.650000000000006" y="67" width="4" height="1" fill="#c8c8c8"/><rect x="58.650000000000006" y="76" width="6" height="1" fill="#c0c0c0"/><rect x="80.7" y="36.2" width="4" height="37.3" fill="#d9a520"/><rect x="76.9" y="71" width="3.6" height="2.5" fill="#1f1f1f"/><rect x="86.7" y="42" width="5" height="1" fill="#c8c8c8"/><rect x="73.7" y="67" width="4" height="1" fill="#c8c8c8"/><rect x="77.7" y="76" width="6" height="1" fill="#c0c0c0"/><rect x="99.75" y="36.2" width="4" height="37.3" fill="#d9a520"/><rect x="95.95" y="71" width="3.6" height="2.5" fill="#1f1f1f"/><rect x="105.75" y="42" width="5" height="1" fill="#c8c8c8"/><rect x="92.75" y="67" width="4" height="1" fill="#c8c8c8"/><rect x="96.75" y="76" width="6" height="1" fill="#c0c0c0"/><rect x="118.80000000000001" y="36.2" width="4" height="37.3" fill="#d9a520"/><rect x="115.00000000000001" y="71" width="3.6" height="2.5" fill="#1f1f1f"/><rect x="124.80000000000001" y="42" width="5" height="1" fill="#c8c8c8"/><rect x="111.80000000000001" y="67" width="4" height="1" fill="#c8c8c8"/><rect x="115.80000000000001" y="76" width="6" height="1" fill="#c0c0c0"/><rect x="137.85" y="36.2" width="4" height="37.3" fill="#d9a520"/><rect x="134.04999999999998" y="71" width="3.6" height="2.5" fill="#1f1f1f"/><rect x="143.85" y="42" width="5" height="1" fill="#c8c8c8"/><rect x="130.85" y="67" width="4" height="1" fill="#c8c8c8"/><rect x="134.85" y="76" width="6" height="1" fill="#c0c0c0"/><polyline points="41,28.7 60,33 79,28.3 98,29.4 117,29.4 136,42.5" fill="none" stroke="#8a8a8a" stroke-width=".9"/><circle cx="41" cy="28.7" r="1" fill="#666"/><rect x="39" y="24.7" width="7" height="1" fill="#b5b5b5"/><circle cx="60" cy="33" r="1" fill="#666"/><rect x="58" y="29" width="7" height="1" fill="#b5b5b5"/><circle cx="79" cy="28.3" r="1" fill="#666"/><rect x="77" y="24.3" width="7" height="1" fill="#b5b5b5"/><circle cx="98" cy="29.4" r="1" fill="#666"/><rect x="96" y="25.4" width="7" height="1" fill="#b5b5b5"/><circle cx="117" cy="29.4" r="1" fill="#666"/><rect x="115" y="25.4" width="7" height="1" fill="#b5b5b5"/><circle cx="136" cy="42.5" r="1" fill="#666"/><rect x="134" y="38.5" width="7" height="1" fill="#b5b5b5"/><rect x="30" y="73.6" width="118" height=".6" fill="#ccc"/><rect x="84" y="80" width="5" height="1" fill="#bbb"/><rect x="41.8" y="88.8" width="4.7" height="1.6" fill="#e2505a"/><rect x="47.3" y="89" width="34" height="1" fill="#aaa"/><rect x="87" y="88.8" width="4.8" height="1.6" fill="#1e1e1e"/><rect x="92.6" y="89" width="38" height="1" fill="#aaa"/><rect x="41.8" y="94.3" width="4.7" height="1.6" fill="#e0b020"/><rect x="47.3" y="94.5" width="34" height="1" fill="#aaa"/><rect x="87" y="94.8" width="4" height=".8" fill="#777"/><rect x="92.6" y="94.5" width="36" height="1" fill="#aaa"/><rect x="25.2" y="103.3" width="110" height="1.4" fill="#3a3a3a" opacity=".85"/></svg>
<div class="a" style="left:11.1px;top:503.7px;width:200.8px;height:113.40000000000003px;background:#fff;border:1px solid #c8c8c8"></div><svg class="a" style="left:12.1px;top:504.7px;overflow:hidden" width="198.8" height="111.40000000000003" viewBox="0 0 198.8 111.40000000000003"><polygon points="1,61.400000000000006 17,77.4 1,92.4" fill="#4a96a3"/><polygon points="1,96.4 17,111.9 1,111.9" fill="#7ea55a"/><polygon points="17,96.4 26,88.4 48,111.9 34,111.9" fill="#f7d348"/><rect x="61" y="102.4" width="34.5" height="1.3" fill="#7a8a4a"/><rect x="48.2" y="18.3" width="3.1" height="1" fill="#555"/><rect x="48.2" y="27.8" width="3.1" height="1" fill="#555"/><rect x="48.2" y="37.3" width="3.1" height="1" fill="#555"/><rect x="48.2" y="46.8" width="3.1" height="1" fill="#555"/><rect x="48.2" y="56.3" width="3.1" height="1" fill="#555"/><rect x="48.2" y="66" width="3.1" height="1" fill="#555"/><rect x="51" y="22" width="118" height=".5" fill="#eee"/><rect x="51" y="37" width="118" height=".5" fill="#eee"/><rect x="51" y="52" width="118" height=".5" fill="#eee"/><rect x="46" y="35" width="1" height="9" fill="#666"/><rect x="59.3" y="54.5" width="5.5" height="7.2" fill="#8d8d8d"/><rect x="58.3" y="53.5" width="7" height="1" fill="#555"/><rect x="58.3" y="63.3" width="6" height=".9" fill="#6a7a40"/><rect x="77.69999999999999" y="54.5" width="5.5" height="7.2" fill="#8d8d8d"/><rect x="76.69999999999999" y="53.5" width="7" height="1" fill="#555"/><rect x="76.69999999999999" y="63.3" width="6" height=".9" fill="#6a7a40"/><rect x="81.5" y="33.1" width="7" height="28.6" fill="#d9d1ad"/><rect x="87.0" y="34.1" width="1.5" height="27.6" fill="#bdb38a"/><rect x="81.5" y="32.5" width="7" height="1.2" fill="#4a4a3a"/><rect x="96.1" y="54.5" width="5.5" height="7.2" fill="#8d8d8d"/><rect x="95.1" y="53.5" width="7" height="1" fill="#555"/><rect x="95.1" y="63.3" width="6" height=".9" fill="#6a7a40"/><rect x="100.55" y="27.6" width="7" height="34.1" fill="#d9d1ad"/><rect x="106.05" y="28.6" width="1.5" height="33.1" fill="#bdb38a"/><rect x="100.55" y="27.0" width="7" height="1.2" fill="#4a4a3a"/><rect x="114.5" y="54.5" width="5.5" height="7.2" fill="#8d8d8d"/><rect x="113.5" y="53.5" width="7" height="1" fill="#555"/><rect x="113.5" y="63.3" width="6" height=".9" fill="#6a7a40"/><rect x="119.6" y="22.8" width="7" height="38.900000000000006" fill="#d9d1ad"/><rect x="125.1" y="23.8" width="1.5" height="37.900000000000006" fill="#bdb38a"/><rect x="119.6" y="22.2" width="7" height="1.2" fill="#4a4a3a"/><rect x="132.89999999999998" y="54.5" width="5.5" height="7.2" fill="#8d8d8d"/><rect x="131.89999999999998" y="53.5" width="7" height="1" fill="#555"/><rect x="131.89999999999998" y="63.3" width="6" height=".9" fill="#6a7a40"/><rect x="138.65" y="20.4" width="7" height="41.300000000000004" fill="#d9d1ad"/><rect x="144.15" y="21.4" width="1.5" height="40.300000000000004" fill="#bdb38a"/><rect x="138.65" y="19.799999999999997" width="7" height="1.2" fill="#4a4a3a"/><rect x="151.3" y="54.5" width="5.5" height="7.2" fill="#8d8d8d"/><rect x="150.3" y="53.5" width="7" height="1" fill="#555"/><rect x="150.3" y="63.3" width="6" height=".9" fill="#6a7a40"/><rect x="157.7" y="19.6" width="7" height="42.1" fill="#d9d1ad"/><rect x="163.2" y="20.6" width="1.5" height="41.1" fill="#bdb38a"/><rect x="157.7" y="19.0" width="7" height="1.2" fill="#4a4a3a"/><rect x="65" y="60.5" width="10" height="1.5" fill="#aaa"/><rect x="56" y="67.2" width="10" height="1" fill="#4a5a8a"/><rect x="70" y="67.2" width="8" height="1" fill="#4a5a8a"/><rect x="81" y="67.2" width="6" height="1" fill="#4a5a8a"/><rect x="46.6" y="73.6" width="120.5" height="1.8" fill="#2f3f30"/><rect x="68.8" y="79.6" width="76.9" height="1.8" fill="#2f3f30"/><rect x="38.7" y="85.8" width="12.6" height="1.2" fill="#333"/><rect x="56.1" y="85.8" width="23.8" height="1.2" fill="#5aa7b5"/></svg>
<div class="a" style="left:8.7px;top:636px;width:206.2px;height:119.3px;background:#c9472b"></div>
<div class="a" style="left:12.7px;top:639.8px;width:198.3px;height:112px;background:#fdfdfd"></div>
<div class="a" style="left:12.7px;top:639.8px;width:198.3px;height:112px;overflow:hidden"><div class="a" style="left:0;top:0;width:1387px;height:1000px;transform:translate(-62.37px,-52.82px) scale(0.18027);transform-origin:0 0"><svg class="a" style="left:0px;top:0px;overflow:hidden" width="1387" height="914.280887544125" viewBox="0 0 1387 914.280887544125"><polygon points="346,649 434.2,737.2 346,825.7" fill="#4a96a3"/><polygon points="346,830 430.2808875441251,914.280887544125 346,914.280887544125" fill="#7fa35b"/><polygon points="434.2,828.6 479.1,783.6 609.780887544125,914.280887544125 519.8808875441249,914.280887544125" fill="#f8d347"/><rect x="680.6" y="864" width="193.6" height="9" fill="#5e7a3c"/><polygon points="558.0,695.0 713.0,695.0 747.5,640.1 618.1,640.1" fill="#ccb46a" /><polygon points="713.0,695.0 743.0,623.0 772.5,579.9 747.5,640.1" fill="#8e7c48" /><polygon points="743.0,623.0 899.0,622.0 902.8,579.1 772.5,579.9" fill="#ccb46a" /><polygon points="899.0,622.0 935.0,550.0 932.9,519.0 902.8,579.1" fill="#8e7c48" /><polygon points="935.0,550.0 1093.0,550.0 1064.8,519.0 932.9,519.0" fill="#ccb46a" /><polygon points="1093.0,550.0 1129.0,478.0 1094.8,458.9 1064.8,519.0" fill="#8e7c48" /><polygon points="1129.0,478.0 1284.0,477.0 1224.3,458.0 1094.8,458.9" fill="#ccb46a" /><polygon points="558.0,695.0 713.0,695.0 743.0,623.0 899.0,622.0 935.0,550.0 1093.0,550.0 1129.0,478.0 1284.0,477.0 1284.0,484.5 1129.0,485.5 1093.0,557.5 935.0,557.5 899.0,629.5 743.0,630.5 713.0,702.5 558.0,702.5" fill="#f8e9b2" /><polyline points="558.0,702.5 713.0,702.5 743.0,630.5 899.0,629.5 935.0,557.5 1093.0,557.5 1129.0,485.5 1284.0,484.5" fill="none" stroke="#e2cf8c" stroke-width="1"/></svg>
<div class="t" style="left:648.90px;top:342.18px;font-size:22px;line-height:22px;color:#667b3b;font-family:'Liberation Serif',serif;font-weight:700;letter-spacing:0.555px;">За рахунок чого розвивається бізнес?!</div>
<svg class="a" style="left:570.4px;top:560.1px;overflow:hidden" width="152.6" height="109.2" viewBox="0 0 152.6 109.2"><defs><linearGradient id="ps" x1="0" y1="0" x2="1" y2="0.2"><stop offset="0" stop-color="#3e3432"/><stop offset=".2" stop-color="#7a6a66"/><stop offset=".5" stop-color="#a39590"/><stop offset="1" stop-color="#8a7b76"/></linearGradient></defs><rect width="152.6" height="109.2" fill="url(#ps)"/><path d="M75 0 L152.6 0 L152.6 44 Q130 12 75 0 Z" fill="#141212"/><polygon points="13,64 131,8 152.6,60 152.6,109.2 30,109.2" fill="#f1f1ee"/><polygon points="13,64 131,8 138,22 105.5,47.6 35.2,82.8" fill="#d5eb93"/><polygon points="106.9,15.2 129.8,7 132.5,15.2 113.6,27.3" fill="#a6ddd0"/><polygon points="81.2,28.7 106.9,15.2 113.6,27.3 87.9,42.2" fill="#1d2a20"/><text x="0" y="0" transform="translate(86,41) rotate(-29)" font-family="Liberation Sans" font-weight="bold" font-size="12.5" fill="#f2f5ee">57%</text><text x="0" y="0" transform="translate(27,76) rotate(-30)" font-family="Liberation Sans" font-weight="bold" font-size="8.6" fill="#26331c">ДЕРЖАВНА</text><text x="0" y="0" transform="translate(32,86) rotate(-30)" font-family="Liberation Sans" font-weight="bold" font-size="8.6" fill="#26331c">ПРОГРАМА</text><polygon points="38,98 70,82 71,84 39,100" fill="#cfd3cf"/><polygon points="70,70 84,63 86,69 72,76" fill="#444"/><polygon points="78,52 100,41 101,43 79,54" fill="#bbb"/><path d="M132.5 11 Q142 6 147.4 8.4 L147.4 46.3 Q138 44 135 35.5 Z" fill="#dcc7c0"/><path d="M106.9 39.5 Q120 30 135 38 Q145 46 147.4 49 L147.4 109.2 L104 109.2 Q112 90 109.5 76 Q104 58 106.9 39.5 Z" fill="#1f1e1e"/><rect x="0" y="0" width="6" height="109.2" fill="#050505"/><rect x="146.5" y="0" width="6.1" height="109.2" fill="#050505"/><rect x="7" y="7" width="9" height="4" fill="#e0e0e0"/></svg>
<svg class="a" style="left:777px;top:477.8px;overflow:hidden" width="109.3" height="108.5" viewBox="0 0 109.3 108.5"><rect width="109.3" height="108.5" fill="#06adee"/><rect x="11.3" y="14.8" width="58.5" height="78.9" rx="5.5" fill="none" stroke="#8ad9fb" stroke-width="1.2"/><path d="M22.9 25.4 V42.3 M19.5 27 Q19.5 37 22.9 38 Q26.3 37 26.3 27" fill="none" stroke="#9fe0fb" stroke-width="1.3"/><rect x="32.4" y="33" width="16.2" height="1.8" fill="#b5e8fc"/><rect x="19.7" y="49.2" width="42.3" height="1.8" fill="#c8eefd"/><rect x="19.7" y="61.2" width="20" height="1.8" fill="#c8eefd"/><rect x="19.7" y="72.5" width="29" height="1.8" fill="#c8eefd"/><path d="M40.5 55 Q44 51 49.5 53.5 L50.5 69.5 Q44 72 41 68 Z" fill="#1e1e22"/><path d="M49 55 Q60 52 73 56 Q76 66 70 80 Q62 86 56 80 Q50 72 49 64 Z" fill="#ebcfc6"/><path d="M58 60 Q64 62 68 70 M56 68 Q62 72 66 78" fill="none" stroke="#c9a59b" stroke-width="1"/><path d="M72 54 Q80 51 83 58 Q84 68 76 70 L72 68 Z" fill="#3f5fd8"/></svg>
<svg class="a" style="left:925px;top:425px;" width="145" height="118" viewBox="0 0 145 118"><defs><linearGradient id="scr" x1="0" y1="0" x2="0" y2="1"><stop offset="0" stop-color="#56b8ea"/><stop offset=".3" stop-color="#1b93d6"/><stop offset="1" stop-color="#1382c6"/></linearGradient></defs><polygon points="8.1,24.3 78.5,11.5 93.3,59.5 26.4,73.7" fill="#e2e2e6" stroke="#c2c2c8" stroke-width=".8"/><polygon points="13.5,25 75.7,15.6 88.6,56.8 27,67.6" fill="url(#scr)"/><polyline points="30.4,55.5 40.6,39.2 47.3,48 53.4,28.4 64.9,50 70.3,35.2 75,35.2" fill="none" stroke="#6fd0f3" stroke-width="3"/><polygon points="25,75.7 93.3,61.5 138,89.3 137.3,100 62.2,112.3 25.7,86.6" fill="#ededf0" stroke="#bdbdc3" stroke-width=".8"/><polygon points="25.7,86.6 62.2,103 137.3,91 137.3,100 62.2,112.3" fill="#c4c4ca"/><polygon points="35.8,81.2 96,68.3 115,77.8 52,93.3" fill="#d2d2d6"/><line x1="39.0" y1="83.6" x2="99.8" y2="70.2" stroke="#e9e9ec" stroke-width=".7"/><line x1="42.3" y1="86.0" x2="103.6" y2="72.1" stroke="#e9e9ec" stroke-width=".7"/><line x1="45.5" y1="88.5" x2="107.4" y2="74.0" stroke="#e9e9ec" stroke-width=".7"/><line x1="48.8" y1="90.9" x2="111.2" y2="75.9" stroke="#e9e9ec" stroke-width=".7"/><line x1="40.8" y1="80.1" x2="57.2" y2="92.0" stroke="#e9e9ec" stroke-width=".7"/><line x1="45.8" y1="79.0" x2="62.5" y2="90.7" stroke="#e9e9ec" stroke-width=".7"/><line x1="50.8" y1="78.0" x2="67.8" y2="89.4" stroke="#e9e9ec" stroke-width=".7"/><line x1="55.9" y1="76.9" x2="73.0" y2="88.1" stroke="#e9e9ec" stroke-width=".7"/><line x1="60.9" y1="75.8" x2="78.2" y2="86.8" stroke="#e9e9ec" stroke-width=".7"/><line x1="65.9" y1="74.8" x2="83.5" y2="85.5" stroke="#e9e9ec" stroke-width=".7"/><line x1="70.9" y1="73.7" x2="88.8" y2="84.3" stroke="#e9e9ec" stroke-width=".7"/><line x1="75.9" y1="72.6" x2="94.0" y2="83.0" stroke="#e9e9ec" stroke-width=".7"/><line x1="80.9" y1="71.5" x2="99.2" y2="81.7" stroke="#e9e9ec" stroke-width=".7"/><line x1="86.0" y1="70.5" x2="104.5" y2="80.4" stroke="#e9e9ec" stroke-width=".7"/><line x1="91.0" y1="69.4" x2="109.8" y2="79.1" stroke="#e9e9ec" stroke-width=".7"/><polygon points="84,86 100,82.5 108,88 91,91.5" fill="#d8d8dc"/><polygon points="25.7,80 30,82 30,90 25.7,86.6" fill="#9a9aa2"/><ellipse cx="100" cy="93" rx="7.5" ry="2.6" fill="#f2a321"/></svg>
<svg class="a" style="left:1140px;top:345px;" width="110" height="115" viewBox="0 0 110 115"><polygon points="10.1,14.9 40.6,28.4 40.6,93.4 10.1,86.6" fill="#f3f3f6" stroke="#a8a8b0" stroke-width=".8"/><line x1="10.1" y1="14.9" x2="10.1" y2="86.6" stroke="#b5b5bd" stroke-width=".9"/><line x1="14.8" y1="17.0" x2="14.8" y2="87.6" stroke="#b5b5bd" stroke-width=".9"/><line x1="19.5" y1="19.1" x2="19.5" y2="88.7" stroke="#b5b5bd" stroke-width=".9"/><line x1="24.2" y1="21.1" x2="24.2" y2="89.7" stroke="#b5b5bd" stroke-width=".9"/><line x1="28.9" y1="23.2" x2="28.9" y2="90.8" stroke="#b5b5bd" stroke-width=".9"/><line x1="33.6" y1="25.3" x2="33.6" y2="91.8" stroke="#b5b5bd" stroke-width=".9"/><line x1="38.3" y1="27.4" x2="38.3" y2="92.9" stroke="#b5b5bd" stroke-width=".9"/><line x1="10.1" y1="14.9" x2="40.6" y2="28.4" stroke="#b5b5bd" stroke-width=".9"/><line x1="10.1" y1="19.9" x2="40.6" y2="33.0" stroke="#b5b5bd" stroke-width=".9"/><line x1="10.1" y1="24.9" x2="40.6" y2="37.6" stroke="#b5b5bd" stroke-width=".9"/><line x1="10.1" y1="29.9" x2="40.6" y2="42.2" stroke="#b5b5bd" stroke-width=".9"/><line x1="10.1" y1="34.9" x2="40.6" y2="46.8" stroke="#b5b5bd" stroke-width=".9"/><line x1="10.1" y1="39.9" x2="40.6" y2="51.4" stroke="#b5b5bd" stroke-width=".9"/><line x1="10.1" y1="44.9" x2="40.6" y2="56.0" stroke="#b5b5bd" stroke-width=".9"/><line x1="10.1" y1="49.9" x2="40.6" y2="60.6" stroke="#b5b5bd" stroke-width=".9"/><line x1="10.1" y1="54.9" x2="40.6" y2="65.2" stroke="#b5b5bd" stroke-width=".9"/><line x1="10.1" y1="59.9" x2="40.6" y2="69.8" stroke="#b5b5bd" stroke-width=".9"/><line x1="10.1" y1="64.9" x2="40.6" y2="74.4" stroke="#b5b5bd" stroke-width=".9"/><line x1="10.1" y1="69.9" x2="40.6" y2="79.0" stroke="#b5b5bd" stroke-width=".9"/><line x1="10.1" y1="74.9" x2="40.6" y2="83.6" stroke="#b5b5bd" stroke-width=".9"/><line x1="10.1" y1="79.9" x2="40.6" y2="88.2" stroke="#b5b5bd" stroke-width=".9"/><line x1="10.1" y1="84.9" x2="40.6" y2="92.8" stroke="#b5b5bd" stroke-width=".9"/><polygon points="40.6,28.4 52.1,25.7 52.1,75.8 40.6,93.4" fill="#e2def0"/><line x1="40.6" y1="30.0" x2="52.1" y2="27.0" stroke="#c2bdd8" stroke-width=".7"/><line x1="40.6" y1="34.2" x2="52.1" y2="31.2" stroke="#c2bdd8" stroke-width=".7"/><line x1="40.6" y1="38.4" x2="52.1" y2="35.4" stroke="#c2bdd8" stroke-width=".7"/><line x1="40.6" y1="42.6" x2="52.1" y2="39.6" stroke="#c2bdd8" stroke-width=".7"/><line x1="40.6" y1="46.8" x2="52.1" y2="43.8" stroke="#c2bdd8" stroke-width=".7"/><line x1="40.6" y1="51.0" x2="52.1" y2="48.0" stroke="#c2bdd8" stroke-width=".7"/><line x1="40.6" y1="55.2" x2="52.1" y2="52.2" stroke="#c2bdd8" stroke-width=".7"/><line x1="40.6" y1="59.4" x2="52.1" y2="56.4" stroke="#c2bdd8" stroke-width=".7"/><line x1="40.6" y1="63.6" x2="52.1" y2="60.6" stroke="#c2bdd8" stroke-width=".7"/><line x1="40.6" y1="67.8" x2="52.1" y2="64.8" stroke="#c2bdd8" stroke-width=".7"/><line x1="40.6" y1="72.0" x2="52.1" y2="69.0" stroke="#c2bdd8" stroke-width=".7"/><line x1="40.6" y1="76.2" x2="52.1" y2="73.2" stroke="#c2bdd8" stroke-width=".7"/><polygon points="10.1,14.9 21.7,10.1 52.1,25 40.6,28.4" fill="#ececf0" stroke="#b0b0b8" stroke-width=".7"/><polygon points="31,88 48.7,111 67.7,97.4 67.7,80 44.7,94.7 29,75.8" fill="#e9e9ee"/><polygon points="48.7,111 67.7,97.4 67.7,80 48,92" fill="#cdcdd4"/><polygon points="29,75.8 65,61 81.2,73 44.7,94.7" fill="#18b4e4"/><polygon points="55,66 65,61 81.2,73 70,80" fill="#1aa3d6"/><polygon points="50,68 55,66 72,80 67,83" fill="#f3be1e"/><polygon points="72,54 87,48 101,74 95,78.5 95,98 81,98 81,64" fill="#f08433"/><polygon points="87,48 101,74 95,78.5 85,57" fill="#d4601e"/><rect x="78.5" y="78.5" width="16.2" height="25.7" rx="3" fill="#f2be22"/><rect x="69" y="92" width="16.3" height="16" rx="3" fill="#f5c62a"/><rect x="69" y="94" width="16.3" height=".8" fill="#d39a10"/><rect x="78.5" y="81.0" width="16.2" height=".8" fill="#d39a10"/><rect x="69" y="97" width="16.3" height=".8" fill="#d39a10"/><rect x="78.5" y="85.5" width="16.2" height=".8" fill="#d39a10"/><rect x="69" y="100" width="16.3" height=".8" fill="#d39a10"/><rect x="78.5" y="90.0" width="16.2" height=".8" fill="#d39a10"/><rect x="69" y="103" width="16.3" height=".8" fill="#d39a10"/><rect x="78.5" y="94.5" width="16.2" height=".8" fill="#d39a10"/><rect x="69" y="106" width="16.3" height=".8" fill="#d39a10"/><rect x="78.5" y="99.0" width="16.2" height=".8" fill="#d39a10"/></svg>
<svg class="a" style="left:548.3px;top:704.8px;" width="191.5" height="92.0" viewBox="0 0 191.5 92.0"><defs><linearGradient id="g1" x1="0" x2="1"><stop offset="0" stop-color="#4d92a3"/><stop offset=".12" stop-color="#66a6b5"/><stop offset=".4" stop-color="#83b9c6"/><stop offset=".75" stop-color="#6eaab8"/><stop offset=".95" stop-color="#4f94a5"/><stop offset="1" stop-color="#4a8fa0"/></linearGradient></defs><rect x="3.5" y="3.5" width="183.5" height="84.0" rx="42.0" fill="#8c8c8c" opacity=".7"/><rect x="2" y="2" width="183.5" height="84.0" rx="42.0" fill="url(#g1)"/></svg>
<svg class="a" style="left:735.1px;top:631.7px;" width="215.79999999999995" height="100.79999999999995" viewBox="0 0 215.79999999999995 100.79999999999995"><defs><linearGradient id="g2" x1="0" x2="1"><stop offset="0" stop-color="#4d92a3"/><stop offset=".12" stop-color="#66a6b5"/><stop offset=".4" stop-color="#83b9c6"/><stop offset=".75" stop-color="#6eaab8"/><stop offset=".95" stop-color="#4f94a5"/><stop offset="1" stop-color="#4a8fa0"/></linearGradient></defs><rect x="3.5" y="3.5" width="207.79999999999995" height="92.79999999999995" rx="46.39999999999998" fill="#8c8c8c" opacity=".7"/><rect x="2" y="2" width="207.79999999999995" height="92.79999999999995" rx="46.39999999999998" fill="url(#g2)"/></svg>
<svg class="a" style="left:927.7px;top:558.4px;" width="171.5" height="89.70000000000005" viewBox="0 0 171.5 89.70000000000005"><defs><linearGradient id="g3" x1="0" x2="1"><stop offset="0" stop-color="#4d92a3"/><stop offset=".12" stop-color="#66a6b5"/><stop offset=".4" stop-color="#83b9c6"/><stop offset=".75" stop-color="#6eaab8"/><stop offset=".95" stop-color="#4f94a5"/><stop offset="1" stop-color="#4a8fa0"/></linearGradient></defs><rect x="3.5" y="3.5" width="163.5" height="81.70000000000005" rx="40.85000000000002" fill="#8c8c8c" opacity=".7"/><rect x="2" y="2" width="163.5" height="81.70000000000005" rx="40.85000000000002" fill="url(#g3)"/></svg>
<div class="a" style="left:1124.4px;top:488.1px;width:163.9px;height:142.6px;background:#8ec2cd"></div>
<div class="t" style="left:583.00px;top:714.73px;font-size:16.8px;line-height:16.8px;color:#1d3670;font-family:'Liberation Serif',serif;font-weight:400;letter-spacing:1.339px;white-space:pre">Державні</div>
<div class="t" style="left:581.50px;top:737.43px;font-size:16.8px;line-height:16.8px;color:#1d3670;font-family:'Liberation Serif',serif;font-weight:400;letter-spacing:1.482px;white-space:pre">програми</div>
<div class="t" style="left:581.60px;top:759.33px;font-size:16.8px;line-height:16.8px;color:#1d3670;font-family:'Liberation Serif',serif;font-weight:400;letter-spacing:0.578px;white-space:pre">підтримки</div>
<div class="t" style="left:791.90px;top:642.63px;font-size:16.8px;line-height:16.8px;color:#1d3670;font-family:'Liberation Serif',serif;font-weight:400;letter-spacing:0.928px;white-space:pre">Гранти для</div>
<div class="t" style="left:791.00px;top:666.43px;font-size:16.8px;line-height:16.8px;color:#1d3670;font-family:'Liberation Serif',serif;font-weight:400;letter-spacing:0.161px;white-space:pre">мікробізнесу</div>
<div class="t" style="left:749.00px;top:687.83px;font-size:16.8px;line-height:16.8px;color:#1d3670;font-family:'Liberation Serif',serif;font-weight:400;letter-spacing:0.558px;white-space:pre">(наприклад, “єРобота”).</div>
<div class="t" style="left:977.10px;top:570.33px;font-size:16.8px;line-height:16.8px;color:#1d3670;font-family:'Liberation Serif',serif;font-weight:400;letter-spacing:0.361px;white-space:pre">Пільгові</div>
<div class="t" style="left:975.20px;top:593.03px;font-size:16.8px;line-height:16.8px;color:#1d3670;font-family:'Liberation Serif',serif;font-weight:400;letter-spacing:0.789px;white-space:pre">кредити,</div>
<div class="t" style="left:964.80px;top:615.13px;font-size:16.8px;line-height:16.8px;color:#1d3670;font-family:'Liberation Serif',serif;font-weight:400;letter-spacing:0.597px;white-space:pre">навчання…</div>
<div class="t" style="left:1155.10px;top:495.73px;font-size:16.8px;line-height:16.8px;color:#1d3670;font-family:'Liberation Serif',serif;font-weight:400;letter-spacing:0.818px;white-space:pre">Підтримка з</div>
<div class="t" style="left:1133.10px;top:519.13px;font-size:16.8px;line-height:16.8px;color:#1d3670;font-family:'Liberation Serif',serif;font-weight:400;letter-spacing:0.667px;white-space:pre">боку громадських</div>
<div class="t" style="left:1147.90px;top:539.93px;font-size:16.8px;line-height:16.8px;color:#1d3670;font-family:'Liberation Serif',serif;font-weight:400;letter-spacing:0.364px;white-space:pre">організацій  та</div>
<div class="t" style="left:1155.00px;top:563.33px;font-size:16.8px;line-height:16.8px;color:#1d3670;font-family:'Liberation Serif',serif;font-weight:400;letter-spacing:0.970px;white-space:pre">донорів ЄС,</div>
<div class="t" style="left:1184.00px;top:584.93px;font-size:16.8px;line-height:16.8px;color:#1d3670;font-family:'Liberation Serif',serif;font-weight:400;letter-spacing:0.892px;white-space:pre">ООН,</div>
<div class="t" style="left:1182.20px;top:605.73px;font-size:16.8px;line-height:16.8px;color:#1d3670;font-family:'Liberation Serif',serif;font-weight:400;letter-spacing:0.231px;white-space:pre">USAID</div></div></div>
<div class="a" style="left:11.1px;top:774.2px;width:200.8px;height:120px;background:#fff;border:1px solid #c8c8c8"></div>
<svg class="a" style="left:12.1px;top:775.2px;overflow:hidden" width="198.8" height="112" viewBox="0 0 198.8 112"><polygon points="1,61.5 17,77.5 1,92.5" fill="#4a96a3"/><polygon points="1,96.5 17,112.0 1,112.0" fill="#7ea55a"/><polygon points="17,96.5 26,88.5 48,112.0 34,112.0" fill="#f7d348"/><rect x="61" y="102.5" width="34.5" height="1.3" fill="#7a8a4a"/><path d="M4.5 7.1 H162.5 M4.5 11.8 H175.5" stroke="#3c4a28" stroke-width="1.6" stroke-dasharray="9 1.2 5 1.2 7 1.2" opacity=".85"/><defs><linearGradient id="t5g" x1="0" y1="0" x2="0" y2="1"><stop offset="0" stop-color="#b3bcc8"/><stop offset=".5" stop-color="#cfdae6"/><stop offset="1" stop-color="#b5c4d6"/></linearGradient></defs><ellipse cx="98.5" cy="55" rx="27" ry="32.5" fill="url(#t5g)"/><ellipse cx="98.5" cy="55" rx="11" ry="10" fill="#fff"/><rect x="97.5" y="22" width="2.2" height="66" fill="#fff"/><rect x="70" y="54" width="57" height="2.2" fill="#fff"/><rect x="90" y="51" width="17" height="1.5" fill="#3a4e88"/><rect x="90" y="56" width="17" height="1.5" fill="#3a4e88"/><path d="M78 45 L90 35 M107 32 L118 50 M110 75 L122 62 M80 65 L92 80" stroke="#3a4e88" stroke-width="1" /><rect x="37" y="19" width="58" height="33" fill="none" stroke="#e6ebf2" stroke-width=".8"/><rect x="40" y="22.5" width="42" height=".9" fill="#8a8a8a"/><rect x="40" y="26.1" width="42" height=".9" fill="#8a8a8a"/><rect x="40" y="29.7" width="42" height=".9" fill="#8a8a8a"/><rect x="40" y="33.3" width="42" height=".9" fill="#8a8a8a"/><rect x="40" y="36.9" width="42" height=".9" fill="#8a8a8a"/><rect x="107" y="19" width="57" height="36" fill="none" stroke="#e6ebf2" stroke-width=".8"/><rect x="120" y="22.5" width="41" height=".9" fill="#8a8a8a"/><rect x="120" y="26.1" width="41" height=".9" fill="#8a8a8a"/><rect x="120" y="29.7" width="41" height=".9" fill="#8a8a8a"/><rect x="120" y="33.3" width="41" height=".9" fill="#8a8a8a"/><rect x="120" y="36.9" width="41" height=".9" fill="#8a8a8a"/><rect x="36" y="56" width="36" height="33" fill="none" stroke="#e6ebf2" stroke-width=".8"/><rect x="39" y="59.5" width="20" height=".9" fill="#8a8a8a"/><rect x="39" y="63.1" width="20" height=".9" fill="#8a8a8a"/><rect x="39" y="66.7" width="20" height=".9" fill="#8a8a8a"/><rect x="39" y="70.3" width="20" height=".9" fill="#8a8a8a"/><rect x="39" y="73.9" width="20" height=".9" fill="#8a8a8a"/><rect x="124" y="56" width="37" height="34" fill="none" stroke="#e6ebf2" stroke-width=".8"/><rect x="137" y="59.5" width="21" height=".9" fill="#8a8a8a"/><rect x="137" y="63.1" width="21" height=".9" fill="#8a8a8a"/><rect x="137" y="66.7" width="21" height=".9" fill="#8a8a8a"/><rect x="137" y="70.3" width="21" height=".9" fill="#8a8a8a"/><rect x="137" y="73.9" width="21" height=".9" fill="#8a8a8a"/><rect x="52" y="94.5" width="8" height="1.3" fill="#333"/><rect x="65" y="94.5" width="17" height="1.3" fill="#333"/><rect x="86" y="94.5" width="14" height="1.3" fill="#333"/><rect x="104" y="94.5" width="12" height="1.3" fill="#333"/><rect x="120" y="94.5" width="14" height="1.3" fill="#333"/><rect x="140" y="94.5" width="9" height="1.3" fill="#333"/></svg>
<div class="t" style="left:-5.00px;top:366.61px;font-size:17px;line-height:17px;color:#555;font-family:'Liberation Sans',sans-serif;font-weight:400;transform:scaleX(0.8632);transform-origin:0 0;">8</div>
<div class="t" style="left:-5.30px;top:501.51px;font-size:17px;line-height:17px;color:#555;font-family:'Liberation Sans',sans-serif;font-weight:400;transform:scaleX(0.8632);transform-origin:0 0;">9</div>
<div class="t" style="left:-4.80px;top:635.91px;font-size:17px;line-height:17px;color:#b5573b;font-family:'Liberation Sans',sans-serif;font-weight:400;transform:scaleX(0.8632);transform-origin:0 0;">0</div>
<div class="a" style="left:-1px;top:773.7px;width:2px;height:12.5px;background:#6f6f6f"></div>
<div class="a" style="left:236.7px;top:284px;width:17px;height:603px;background:#dcdcdd"></div>
<div class="a" style="left:236.7px;top:284px;width:17px;height:16.6px;background:#fff;border:1px solid #bdbdbd"></div>
<svg class="a" style="left:240px;top:288px;" width="10" height="8" viewBox="0 0 10 8"><path d="M0.5 6.5 L9 6.5 L4.75 2 Z" fill="#6a6a6a"/></svg>
<div class="a" style="left:236.7px;top:688.4px;width:17px;height:111.9px;background:#fff;border:1px solid #c4c4c4"></div>
<div class="a" style="left:257.8px;top:284px;width:2.2px;height:603px;background:#c9c9c9"></div>
<div class="a" style="left:345px;top:293px;width:1042px;height:594px;background:#fdfdfd;border-left:1px solid #cfcfcf;border-top:1px solid #cfcfcf"></div>
<svg class="a" style="left:0px;top:0px;overflow:hidden" width="1387" height="887" viewBox="0 0 1387 887"><polygon points="346,649 434.2,737.2 346,825.7" fill="#4a96a3"/><polygon points="346,830 403,887 346,887" fill="#7fa35b"/><polygon points="434.2,828.6 479.1,783.6 582.4999999999999,887 492.6,887" fill="#f8d347"/><rect x="680.6" y="864" width="193.6" height="9" fill="#5e7a3c"/><polygon points="558.0,695.0 713.0,695.0 747.5,640.1 618.1,640.1" fill="#ccb46a" /><polygon points="713.0,695.0 743.0,623.0 772.5,579.9 747.5,640.1" fill="#8e7c48" /><polygon points="743.0,623.0 899.0,622.0 902.8,579.1 772.5,579.9" fill="#ccb46a" /><polygon points="899.0,622.0 935.0,550.0 932.9,519.0 902.8,579.1" fill="#8e7c48" /><polygon points="935.0,550.0 1093.0,550.0 1064.8,519.0 932.9,519.0" fill="#ccb46a" /><polygon points="1093.0,550.0 1129.0,478.0 1094.8,458.9 1064.8,519.0" fill="#8e7c48" /><polygon points="1129.0,478.0 1284.0,477.0 1224.3,458.0 1094.8,458.9" fill="#ccb46a" /><polygon points="558.0,695.0 713.0,695.0 743.0,623.0 899.0,622.0 935.0,550.0 1093.0,550.0 1129.0,478.0 1284.0,477.0 1284.0,484.5 1129.0,485.5 1093.0,557.5 935.0,557.5 899.0,629.5 743.0,630.5 713.0,702.5 558.0,702.5" fill="#f8e9b2" /><polyline points="558.0,702.5 713.0,702.5 743.0,630.5 899.0,629.5 935.0,557.5 1093.0,557.5 1129.0,485.5 1284.0,484.5" fill="none" stroke="#e2cf8c" stroke-width="1"/></svg>
<div class="t" style="left:648.90px;top:342.18px;font-size:22px;line-height:22px;color:#667b3b;font-family:'Liberation Serif',serif;font-weight:700;letter-spacing:0.555px;">За рахунок чого розвивається бізнес?!</div>
<svg class="a" style="left:570.4px;top:560.1px;overflow:hidden" width="152.6" height="109.2" viewBox="0 0 152.6 109.2"><defs><linearGradient id="ps" x1="0" y1="0" x2="1" y2="0.2"><stop offset="0" stop-color="#3e3432"/><stop offset=".2" stop-color="#7a6a66"/><stop offset=".5" stop-color="#a39590"/><stop offset="1" stop-color="#8a7b76"/></linearGradient></defs><rect width="152.6" height="109.2" fill="url(#ps)"/><path d="M75 0 L152.6 0 L152.6 44 Q130 12 75 0 Z" fill="#141212"/><polygon points="13,64 131,8 152.6,60 152.6,109.2 30,109.2" fill="#f1f1ee"/><polygon points="13,64 131,8 138,22 105.5,47.6 35.2,82.8" fill="#d5eb93"/><polygon points="106.9,15.2 129.8,7 132.5,15.2 113.6,27.3" fill="#a6ddd0"/><polygon points="81.2,28.7 106.9,15.2 113.6,27.3 87.9,42.2" fill="#1d2a20"/><text x="0" y="0" transform="translate(86,41) rotate(-29)" font-family="Liberation Sans" font-weight="bold" font-size="12.5" fill="#f2f5ee">57%</text><text x="0" y="0" transform="translate(27,76) rotate(-30)" font-family="Liberation Sans" font-weight="bold" font-size="8.6" fill="#26331c">ДЕРЖАВНА</text><text x="0" y="0" transform="translate(32,86) rotate(-30)" font-family="Liberation Sans" font-weight="bold" font-size="8.6" fill="#26331c">ПРОГРАМА</text><polygon points="38,98 70,82 71,84 39,100" fill="#cfd3cf"/><polygon points="70,70 84,63 86,69 72,76" fill="#444"/><polygon points="78,52 100,41 101,43 79,54" fill="#bbb"/><path d="M132.5 11 Q142 6 147.4 8.4 L147.4 46.3 Q138 44 135 35.5 Z" fill="#dcc7c0"/><path d="M106.9 39.5 Q120 30 135 38 Q145 46 147.4 49 L147.4 109.2 L104 109.2 Q112 90 109.5 76 Q104 58 106.9 39.5 Z" fill="#1f1e1e"/><rect x="0" y="0" width="6" height="109.2" fill="#050505"/><rect x="146.5" y="0" width="6.1" height="109.2" fill="#050505"/><rect x="7" y="7" width="9" height="4" fill="#e0e0e0"/></svg>
<svg class="a" style="left:777px;top:477.8px;overflow:hidden" width="109.3" height="108.5" viewBox="0 0 109.3 108.5"><rect width="109.3" height="108.5" fill="#06adee"/><rect x="11.3" y="14.8" width="58.5" height="78.9" rx="5.5" fill="none" stroke="#8ad9fb" stroke-width="1.2"/><path d="M22.9 25.4 V42.3 M19.5 27 Q19.5 37 22.9 38 Q26.3 37 26.3 27" fill="none" stroke="#9fe0fb" stroke-width="1.3"/><rect x="32.4" y="33" width="16.2" height="1.8" fill="#b5e8fc"/><rect x="19.7" y="49.2" width="42.3" height="1.8" fill="#c8eefd"/><rect x="19.7" y="61.2" width="20" height="1.8" fill="#c8eefd"/><rect x="19.7" y="72.5" width="29" height="1.8" fill="#c8eefd"/><path d="M40.5 55 Q44 51 49.5 53.5 L50.5 69.5 Q44 72 41 68 Z" fill="#1e1e22"/><path d="M49 55 Q60 52 73 56 Q76 66 70 80 Q62 86 56 80 Q50 72 49 64 Z" fill="#ebcfc6"/><path d="M58 60 Q64 62 68 70 M56 68 Q62 72 66 78" fill="none" stroke="#c9a59b" stroke-width="1"/><path d="M72 54 Q80 51 83 58 Q84 68 76 70 L72 68 Z" fill="#3f5fd8"/></svg>
<svg class="a" style="left:925px;top:425px;" width="145" height="118" viewBox="0 0 145 118"><defs><linearGradient id="scr" x1="0" y1="0" x2="0" y2="1"><stop offset="0" stop-color="#56b8ea"/><stop offset=".3" stop-color="#1b93d6"/><stop offset="1" stop-color="#1382c6"/></linearGradient></defs><polygon points="8.1,24.3 78.5,11.5 93.3,59.5 26.4,73.7" fill="#e2e2e6" stroke="#c2c2c8" stroke-width=".8"/><polygon points="13.5,25 75.7,15.6 88.6,56.8 27,67.6" fill="url(#scr)"/><polyline points="30.4,55.5 40.6,39.2 47.3,48 53.4,28.4 64.9,50 70.3,35.2 75,35.2" fill="none" stroke="#6fd0f3" stroke-width="3"/><polygon points="25,75.7 93.3,61.5 138,89.3 137.3,100 62.2,112.3 25.7,86.6" fill="#ededf0" stroke="#bdbdc3" stroke-width=".8"/><polygon points="25.7,86.6 62.2,103 137.3,91 137.3,100 62.2,112.3" fill="#c4c4ca"/><polygon points="35.8,81.2 96,68.3 115,77.8 52,93.3" fill="#d2d2d6"/><line x1="39.0" y1="83.6" x2="99.8" y2="70.2" stroke="#e9e9ec" stroke-width=".7"/><line x1="42.3" y1="86.0" x2="103.6" y2="72.1" stroke="#e9e9ec" stroke-width=".7"/><line x1="45.5" y1="88.5" x2="107.4" y2="74.0" stroke="#e9e9ec" stroke-width=".7"/><line x1="48.8" y1="90.9" x2="111.2" y2="75.9" stroke="#e9e9ec" stroke-width=".7"/><line x1="40.8" y1="80.1" x2="57.2" y2="92.0" stroke="#e9e9ec" stroke-width=".7"/><line x1="45.8" y1="79.0" x2="62.5" y2="90.7" stroke="#e9e9ec" stroke-width=".7"/><line x1="50.8" y1="78.0" x2="67.8" y2="89.4" stroke="#e9e9ec" stroke-width=".7"/><line x1="55.9" y1="76.9" x2="73.0" y2="88.1" stroke="#e9e9ec" stroke-width=".7"/><line x1="60.9" y1="75.8" x2="78.2" y2="86.8" stroke="#e9e9ec" stroke-width=".7"/><line x1="65.9" y1="74.8" x2="83.5" y2="85.5" stroke="#e9e9ec" stroke-width=".7"/><line x1="70.9" y1="73.7" x2="88.8" y2="84.3" stroke="#e9e9ec" stroke-width=".7"/><line x1="75.9" y1="72.6" x2="94.0" y2="83.0" stroke="#e9e9ec" stroke-width=".7"/><line x1="80.9" y1="71.5" x2="99.2" y2="81.7" stroke="#e9e9ec" stroke-width=".7"/><line x1="86.0" y1="70.5" x2="104.5" y2="80.4" stroke="#e9e9ec" stroke-width=".7"/><line x1="91.0" y1="69.4" x2="109.8" y2="79.1" stroke="#e9e9ec" stroke-width=".7"/><polygon points="84,86 100,82.5 108,88 91,91.5" fill="#d8d8dc"/><polygon points="25.7,80 30,82 30,90 25.7,86.6" fill="#9a9aa2"/><ellipse cx="100" cy="93" rx="7.5" ry="2.6" fill="#f2a321"/></svg>
<svg class="a" style="left:1140px;top:345px;" width="110" height="115" viewBox="0 0 110 115"><polygon points="10.1,14.9 40.6,28.4 40.6,93.4 10.1,86.6" fill="#f3f3f6" stroke="#a8a8b0" stroke-width=".8"/><line x1="10.1" y1="14.9" x2="10.1" y2="86.6" stroke="#b5b5bd" stroke-width=".9"/><line x1="14.8" y1="17.0" x2="14.8" y2="87.6" stroke="#b5b5bd" stroke-width=".9"/><line x1="19.5" y1="19.1" x2="19.5" y2="88.7" stroke="#b5b5bd" stroke-width=".9"/><line x1="24.2" y1="21.1" x2="24.2" y2="89.7" stroke="#b5b5bd" stroke-width=".9"/><line x1="28.9" y1="23.2" x2="28.9" y2="90.8" stroke="#b5b5bd" stroke-width=".9"/><line x1="33.6" y1="25.3" x2="33.6" y2="91.8" stroke="#b5b5bd" stroke-width=".9"/><line x1="38.3" y1="27.4" x2="38.3" y2="92.9" stroke="#b5b5bd" stroke-width=".9"/><line x1="10.1" y1="14.9" x2="40.6" y2="28.4" stroke="#b5b5bd" stroke-width=".9"/><line x1="10.1" y1="19.9" x2="40.6" y2="33.0" stroke="#b5b5bd" stroke-width=".9"/><line x1="10.1" y1="24.9" x2="40.6" y2="37.6" stroke="#b5b5bd" stroke-width=".9"/><line x1="10.1" y1="29.9" x2="40.6" y2="42.2" stroke="#b5b5bd" stroke-width=".9"/><line x1="10.1" y1="34.9" x2="40.6" y2="46.8" stroke="#b5b5bd" stroke-width=".9"/><line x1="10.1" y1="39.9" x2="40.6" y2="51.4" stroke="#b5b5bd" stroke-width=".9"/><line x1="10.1" y1="44.9" x2="40.6" y2="56.0" stroke="#b5b5bd" stroke-width=".9"/><line x1="10.1" y1="49.9" x2="40.6" y2="60.6" stroke="#b5b5bd" stroke-width=".9"/><line x1="10.1" y1="54.9" x2="40.6" y2="65.2" stroke="#b5b5bd" stroke-width=".9"/><line x1="10.1" y1="59.9" x2="40.6" y2="69.8" stroke="#b5b5bd" stroke-width=".9"/><line x1="10.1" y1="64.9" x2="40.6" y2="74.4" stroke="#b5b5bd" stroke-width=".9"/><line x1="10.1" y1="69.9" x2="40.6" y2="79.0" stroke="#b5b5bd" stroke-width=".9"/><line x1="10.1" y1="74.9" x2="40.6" y2="83.6" stroke="#b5b5bd" stroke-width=".9"/><line x1="10.1" y1="79.9" x2="40.6" y2="88.2" stroke="#b5b5bd" stroke-width=".9"/><line x1="10.1" y1="84.9" x2="40.6" y2="92.8" stroke="#b5b5bd" stroke-width=".9"/><polygon points="40.6,28.4 52.1,25.7 52.1,75.8 40.6,93.4" fill="#e2def0"/><line x1="40.6" y1="30.0" x2="52.1" y2="27.0" stroke="#c2bdd8" stroke-width=".7"/><line x1="40.6" y1="34.2" x2="52.1" y2="31.2" stroke="#c2bdd8" stroke-width=".7"/><line x1="40.6" y1="38.4" x2="52.1" y2="35.4" stroke="#c2bdd8" stroke-width=".7"/><line x1="40.6" y1="42.6" x2="52.1" y2="39.6" stroke="#c2bdd8" stroke-width=".7"/><line x1="40.6" y1="46.8" x2="52.1" y2="43.8" stroke="#c2bdd8" stroke-width=".7"/><line x1="40.6" y1="51.0" x2="52.1" y2="48.0" stroke="#c2bdd8" stroke-width=".7"/><line x1="40.6" y1="55.2" x2="52.1" y2="52.2" stroke="#c2bdd8" stroke-width=".7"/><line x1="40.6" y1="59.4" x2="52.1" y2="56.4" stroke="#c2bdd8" stroke-width=".7"/><line x1="40.6" y1="63.6" x2="52.1" y2="60.6" stroke="#c2bdd8" stroke-width=".7"/><line x1="40.6" y1="67.8" x2="52.1" y2="64.8" stroke="#c2bdd8" stroke-width=".7"/><line x1="40.6" y1="72.0" x2="52.1" y2="69.0" stroke="#c2bdd8" stroke-width=".7"/><line x1="40.6" y1="76.2" x2="52.1" y2="73.2" stroke="#c2bdd8" stroke-width=".7"/><polygon points="10.1,14.9 21.7,10.1 52.1,25 40.6,28.4" fill="#ececf0" stroke="#b0b0b8" stroke-width=".7"/><polygon points="31,88 48.7,111 67.7,97.4 67.7,80 44.7,94.7 29,75.8" fill="#e9e9ee"/><polygon points="48.7,111 67.7,97.4 67.7,80 48,92" fill="#cdcdd4"/><polygon points="29,75.8 65,61 81.2,73 44.7,94.7" fill="#18b4e4"/><polygon points="55,66 65,61 81.2,73 70,80" fill="#1aa3d6"/><polygon points="50,68 55,66 72,80 67,83" fill="#f3be1e"/><polygon points="72,54 87,48 101,74 95,78.5 95,98 81,98 81,64" fill="#f08433"/><polygon points="87,48 101,74 95,78.5 85,57" fill="#d4601e"/><rect x="78.5" y="78.5" width="16.2" height="25.7" rx="3" fill="#f2be22"/><rect x="69" y="92" width="16.3" height="16" rx="3" fill="#f5c62a"/><rect x="69" y="94" width="16.3" height=".8" fill="#d39a10"/><rect x="78.5" y="81.0" width="16.2" height=".8" fill="#d39a10"/><rect x="69" y="97" width="16.3" height=".8" fill="#d39a10"/><rect x="78.5" y="85.5" width="16.2" height=".8" fill="#d39a10"/><rect x="69" y="100" width="16.3" height=".8" fill="#d39a10"/><rect x="78.5" y="90.0" width="16.2" height=".8" fill="#d39a10"/><rect x="69" y="103" width="16.3" height=".8" fill="#d39a10"/><rect x="78.5" y="94.5" width="16.2" height=".8" fill="#d39a10"/><rect x="69" y="106" width="16.3" height=".8" fill="#d39a10"/><rect x="78.5" y="99.0" width="16.2" height=".8" fill="#d39a10"/></svg>
<svg class="a" style="left:548.3px;top:704.8px;" width="191.5" height="92.0" viewBox="0 0 191.5 92.0"><defs><linearGradient id="g1" x1="0" x2="1"><stop offset="0" stop-color="#4d92a3"/><stop offset=".12" stop-color="#66a6b5"/><stop offset=".4" stop-color="#83b9c6"/><stop offset=".75" stop-color="#6eaab8"/><stop offset=".95" stop-color="#4f94a5"/><stop offset="1" stop-color="#4a8fa0"/></linearGradient></defs><rect x="3.5" y="3.5" width="183.5" height="84.0" rx="42.0" fill="#8c8c8c" opacity=".7"/><rect x="2" y="2" width="183.5" height="84.0" rx="42.0" fill="url(#g1)"/></svg>
<svg class="a" style="left:735.1px;top:631.7px;" width="215.79999999999995" height="100.79999999999995" viewBox="0 0 215.79999999999995 100.79999999999995"><defs><linearGradient id="g2" x1="0" x2="1"><stop offset="0" stop-color="#4d92a3"/><stop offset=".12" stop-color="#66a6b5"/><stop offset=".4" stop-color="#83b9c6"/><stop offset=".75" stop-color="#6eaab8"/><stop offset=".95" stop-color="#4f94a5"/><stop offset="1" stop-color="#4a8fa0"/></linearGradient></defs><rect x="3.5" y="3.5" width="207.79999999999995" height="92.79999999999995" rx="46.39999999999998" fill="#8c8c8c" opacity=".7"/><rect x="2" y="2" width="207.79999999999995" height="92.79999999999995" rx="46.39999999999998" fill="url(#g2)"/></svg>
<svg class="a" style="left:927.7px;top:558.4px;" width="171.5" height="89.70000000000005" viewBox="0 0 171.5 89.70000000000005"><defs><linearGradient id="g3" x1="0" x2="1"><stop offset="0" stop-color="#4d92a3"/><stop offset=".12" stop-color="#66a6b5"/><stop offset=".4" stop-color="#83b9c6"/><stop offset=".75" stop-color="#6eaab8"/><stop offset=".95" stop-color="#4f94a5"/><stop offset="1" stop-color="#4a8fa0"/></linearGradient></defs><rect x="3.5" y="3.5" width="163.5" height="81.70000000000005" rx="40.85000000000002" fill="#8c8c8c" opacity=".7"/><rect x="2" y="2" width="163.5" height="81.70000000000005" rx="40.85000000000002" fill="url(#g3)"/></svg>
<div class="a" style="left:1124.4px;top:488.1px;width:163.9px;height:142.6px;background:#8ec2cd"></div>
<div class="t" style="left:583.00px;top:714.73px;font-size:16.8px;line-height:16.8px;color:#1d3670;font-family:'Liberation Serif',serif;font-weight:400;letter-spacing:1.339px;white-space:pre">Державні</div>
<div class="t" style="left:581.50px;top:737.43px;font-size:16.8px;line-height:16.8px;color:#1d3670;font-family:'Liberation Serif',serif;font-weight:400;letter-spacing:1.482px;white-space:pre">програми</div>
<div class="t" style="left:581.60px;top:759.33px;font-size:16.8px;line-height:16.8px;color:#1d3670;font-family:'Liberation Serif',serif;font-weight:400;letter-spacing:0.578px;white-space:pre">підтримки</div>
<div class="t" style="left:791.90px;top:642.63px;font-size:16.8px;line-height:16.8px;color:#1d3670;font-family:'Liberation Serif',serif;font-weight:400;letter-spacing:0.928px;white-space:pre">Гранти для</div>
<div class="t" style="left:791.00px;top:666.43px;font-size:16.8px;line-height:16.8px;color:#1d3670;font-family:'Liberation Serif',serif;font-weight:400;letter-spacing:0.161px;white-space:pre">мікробізнесу</div>
<div class="t" style="left:749.00px;top:687.83px;font-size:16.8px;line-height:16.8px;color:#1d3670;font-family:'Liberation Serif',serif;font-weight:400;letter-spacing:0.558px;white-space:pre">(наприклад, “єРобота”).</div>
<div class="t" style="left:977.10px;top:570.33px;font-size:16.8px;line-height:16.8px;color:#1d3670;font-family:'Liberation Serif',serif;font-weight:400;letter-spacing:0.361px;white-space:pre">Пільгові</div>
<div class="t" style="left:975.20px;top:593.03px;font-size:16.8px;line-height:16.8px;color:#1d3670;font-family:'Liberation Serif',serif;font-weight:400;letter-spacing:0.789px;white-space:pre">кредити,</div>
<div class="t" style="left:964.80px;top:615.13px;font-size:16.8px;line-height:16.8px;color:#1d3670;font-family:'Liberation Serif',serif;font-weight:400;letter-spacing:0.597px;white-space:pre">навчання…</div>
<div class="t" style="left:1155.10px;top:495.73px;font-size:16.8px;line-height:16.8px;color:#1d3670;font-family:'Liberation Serif',serif;font-weight:400;letter-spacing:0.818px;white-space:pre">Підтримка з</div>
<div class="t" style="left:1133.10px;top:519.13px;font-size:16.8px;line-height:16.8px;color:#1d3670;font-family:'Liberation Serif',serif;font-weight:400;letter-spacing:0.667px;white-space:pre">боку громадських</div>
<div class="t" style="left:1147.90px;top:539.93px;font-size:16.8px;line-height:16.8px;color:#1d3670;font-family:'Liberation Serif',serif;font-weight:400;letter-spacing:0.364px;white-space:pre">організацій  та</div>
<div class="t" style="left:1155.00px;top:563.33px;font-size:16.8px;line-height:16.8px;color:#1d3670;font-family:'Liberation Serif',serif;font-weight:400;letter-spacing:0.970px;white-space:pre">донорів ЄС,</div>
<div class="t" style="left:1184.00px;top:584.93px;font-size:16.8px;line-height:16.8px;color:#1d3670;font-family:'Liberation Serif',serif;font-weight:400;letter-spacing:0.892px;white-space:pre">ООН,</div>
<div class="t" style="left:1182.20px;top:605.73px;font-size:16.8px;line-height:16.8px;color:#1d3670;font-family:'Liberation Serif',serif;font-weight:400;letter-spacing:0.231px;white-space:pre">USAID</div>
<svg class="a" style="left:1038px;top:824px;" width="26" height="32" viewBox="0 0 26 32"><path d="M6.5 5.2 L6.5 24.2 L11.5 20.2 L14.3 26.5 Q15.6 27.8 17.4 25 L15.1 19.4 L19.7 18.9 Z" fill="#fff" stroke="#1b1b24" stroke-width="1.3" stroke-linejoin="round"/></svg>
</body></html>
